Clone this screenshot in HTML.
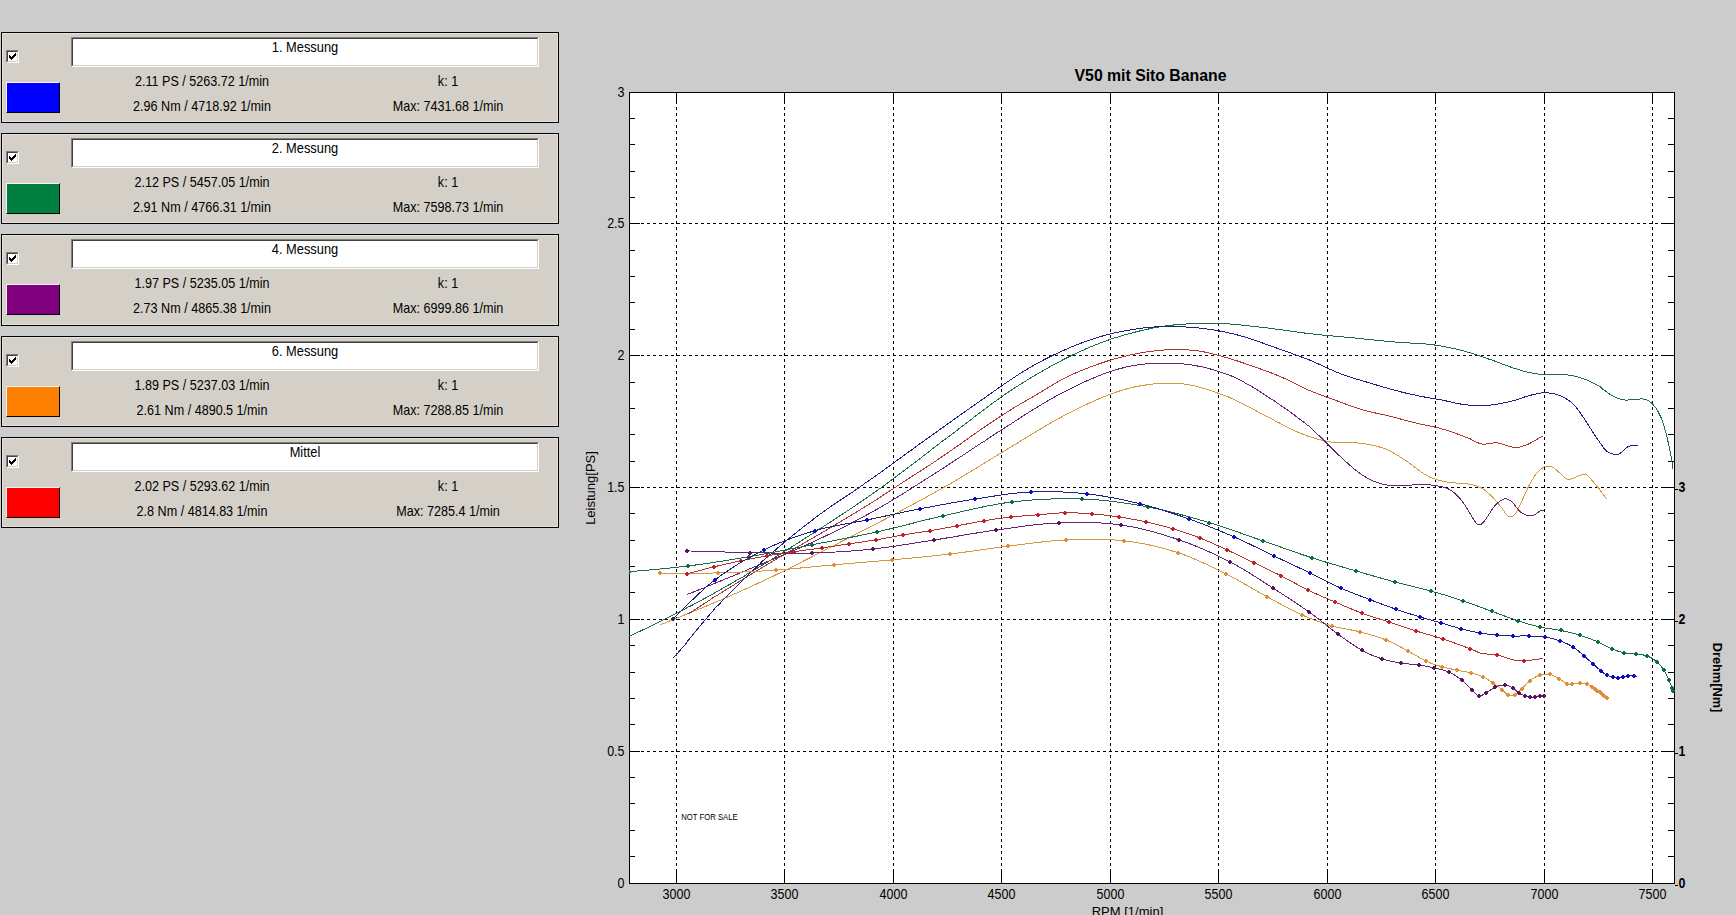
<!DOCTYPE html><html><head><meta charset="utf-8"><style>
*{margin:0;padding:0;box-sizing:border-box}
html,body{width:1736px;height:915px;overflow:hidden;background:#cccccc;font-family:"Liberation Sans",sans-serif;color:#000}
.p{position:absolute;left:1px;width:558px;height:91px;background:#d4d0c8;border:1px solid #000}
.p .hl{position:absolute;left:0;top:0;right:0;bottom:0;border:1px solid #e6e3de}
.cb{position:absolute;left:4px;top:17px;width:13px;height:13px;background:#fff;border-top:1px solid #808080;border-left:1px solid #808080;border-right:1px solid #fff;border-bottom:1px solid #fff}
.cb i{position:absolute;left:0;top:0;width:11px;height:11px;border-top:1px solid #404040;border-left:1px solid #404040;border-right:1px solid #d4d0c8;border-bottom:1px solid #d4d0c8}
.cb svg{position:absolute;left:2px;top:2px}
.sw{position:absolute;left:4px;top:49px;width:54px;height:31px;border-top:1px solid #f4f4f4;border-left:1px solid #f4f4f4;border-right:1px solid #000;border-bottom:1px solid #000}
.tb{position:absolute;left:69px;top:4px;width:468px;height:30px;background:#fff;border-top:1px solid #808080;border-left:1px solid #808080;border-right:1px solid #fff;border-bottom:1px solid #fff}
.tb i{position:absolute;left:0;top:0;right:0;bottom:0;border-top:1px solid #404040;border-left:1px solid #404040;border-right:1px solid #d4d0c8;border-bottom:1px solid #d4d0c8}
.t{position:absolute;white-space:nowrap;font-size:14.2px;line-height:14px;text-align:center;transform:scaleX(0.887)}
.tt{position:absolute;left:0;width:466px;top:1.6px;text-align:center;font-size:14.2px;line-height:14px;white-space:nowrap;transform:scaleX(0.905)}
svg.ch{position:absolute;left:0;top:0}
</style></head><body>
<div class="p" style="top:32px;height:91px"><div class="hl"></div>
<div class="cb"><i></i><svg width="7" height="7" viewBox="0 0 7 7" shape-rendering="crispEdges"><path d="M6 0h1v3h-1zM5 1h1v3h-1zM4 2h1v3h-1zM0 2h1v3h-1zM1 3h1v3h-1zM2 4h1v3h-1zM3 3h1v3h-1z" fill="#000"/></svg></div>
<div class="sw" style="background:#0000ff"></div>
<div class="tb"><i></i><div class="tt">1. Messung</div></div>
<div class="t" style="left:100px;width:200px;top:41px">2.11 PS / 5263.72 1/min</div>
<div class="t" style="left:346px;width:200px;top:41px">k: 1</div>
<div class="t" style="left:100px;width:200px;top:66px">2.96 Nm / 4718.92 1/min</div>
<div class="t" style="left:346px;width:200px;top:66px">Max: 7431.68 1/min</div>
</div>
<div class="p" style="top:133px;height:91px"><div class="hl"></div>
<div class="cb"><i></i><svg width="7" height="7" viewBox="0 0 7 7" shape-rendering="crispEdges"><path d="M6 0h1v3h-1zM5 1h1v3h-1zM4 2h1v3h-1zM0 2h1v3h-1zM1 3h1v3h-1zM2 4h1v3h-1zM3 3h1v3h-1z" fill="#000"/></svg></div>
<div class="sw" style="background:#008040"></div>
<div class="tb"><i></i><div class="tt">2. Messung</div></div>
<div class="t" style="left:100px;width:200px;top:41px">2.12 PS / 5457.05 1/min</div>
<div class="t" style="left:346px;width:200px;top:41px">k: 1</div>
<div class="t" style="left:100px;width:200px;top:66px">2.91 Nm / 4766.31 1/min</div>
<div class="t" style="left:346px;width:200px;top:66px">Max: 7598.73 1/min</div>
</div>
<div class="p" style="top:234px;height:92px"><div class="hl"></div>
<div class="cb"><i></i><svg width="7" height="7" viewBox="0 0 7 7" shape-rendering="crispEdges"><path d="M6 0h1v3h-1zM5 1h1v3h-1zM4 2h1v3h-1zM0 2h1v3h-1zM1 3h1v3h-1zM2 4h1v3h-1zM3 3h1v3h-1z" fill="#000"/></svg></div>
<div class="sw" style="background:#800080"></div>
<div class="tb"><i></i><div class="tt">4. Messung</div></div>
<div class="t" style="left:100px;width:200px;top:41px">1.97 PS / 5235.05 1/min</div>
<div class="t" style="left:346px;width:200px;top:41px">k: 1</div>
<div class="t" style="left:100px;width:200px;top:66px">2.73 Nm / 4865.38 1/min</div>
<div class="t" style="left:346px;width:200px;top:66px">Max: 6999.86 1/min</div>
</div>
<div class="p" style="top:336px;height:91px"><div class="hl"></div>
<div class="cb"><i></i><svg width="7" height="7" viewBox="0 0 7 7" shape-rendering="crispEdges"><path d="M6 0h1v3h-1zM5 1h1v3h-1zM4 2h1v3h-1zM0 2h1v3h-1zM1 3h1v3h-1zM2 4h1v3h-1zM3 3h1v3h-1z" fill="#000"/></svg></div>
<div class="sw" style="background:#ff8000"></div>
<div class="tb"><i></i><div class="tt">6. Messung</div></div>
<div class="t" style="left:100px;width:200px;top:41px">1.89 PS / 5237.03 1/min</div>
<div class="t" style="left:346px;width:200px;top:41px">k: 1</div>
<div class="t" style="left:100px;width:200px;top:66px">2.61 Nm / 4890.5 1/min</div>
<div class="t" style="left:346px;width:200px;top:66px">Max: 7288.85 1/min</div>
</div>
<div class="p" style="top:437px;height:91px"><div class="hl"></div>
<div class="cb"><i></i><svg width="7" height="7" viewBox="0 0 7 7" shape-rendering="crispEdges"><path d="M6 0h1v3h-1zM5 1h1v3h-1zM4 2h1v3h-1zM0 2h1v3h-1zM1 3h1v3h-1zM2 4h1v3h-1zM3 3h1v3h-1z" fill="#000"/></svg></div>
<div class="sw" style="background:#ff0000"></div>
<div class="tb"><i></i><div class="tt">Mittel</div></div>
<div class="t" style="left:100px;width:200px;top:41px">2.02 PS / 5293.62 1/min</div>
<div class="t" style="left:346px;width:200px;top:41px">k: 1</div>
<div class="t" style="left:100px;width:200px;top:66px">2.8 Nm / 4814.83 1/min</div>
<div class="t" style="left:346px;width:200px;top:66px">Max: 7285.4 1/min</div>
</div>
<svg class="ch" width="1736" height="915" viewBox="0 0 1736 915"><rect x="629" y="92" width="1045" height="791" fill="#fff"/><g shape-rendering="crispEdges"><line x1="676.5" y1="92" x2="676.5" y2="883" stroke="#000" stroke-dasharray="3 3" stroke-dashoffset="3" /><line x1="784.5" y1="92" x2="784.5" y2="883" stroke="#000" stroke-dasharray="3 3" stroke-dashoffset="3" /><line x1="893.5" y1="92" x2="893.5" y2="883" stroke="#000" stroke-dasharray="3 3" stroke-dashoffset="3" /><line x1="1001.5" y1="92" x2="1001.5" y2="883" stroke="#000" stroke-dasharray="3 3" stroke-dashoffset="3" /><line x1="1110.5" y1="92" x2="1110.5" y2="883" stroke="#000" stroke-dasharray="3 3" stroke-dashoffset="3" /><line x1="1218.5" y1="92" x2="1218.5" y2="883" stroke="#000" stroke-dasharray="3 3" stroke-dashoffset="3" /><line x1="1327.5" y1="92" x2="1327.5" y2="883" stroke="#000" stroke-dasharray="3 3" stroke-dashoffset="3" /><line x1="1435.5" y1="92" x2="1435.5" y2="883" stroke="#000" stroke-dasharray="3 3" stroke-dashoffset="3" /><line x1="1544.5" y1="92" x2="1544.5" y2="883" stroke="#000" stroke-dasharray="3 3" stroke-dashoffset="3" /><line x1="1652.5" y1="92" x2="1652.5" y2="883" stroke="#000" stroke-dasharray="3 3" stroke-dashoffset="3" /><line x1="629" y1="751.5" x2="1674" y2="751.5" stroke="#000" stroke-dasharray="3 3"/><line x1="629" y1="619.5" x2="1674" y2="619.5" stroke="#000" stroke-dasharray="3 3"/><line x1="629" y1="487.5" x2="1674" y2="487.5" stroke="#000" stroke-dasharray="3 3"/><line x1="629" y1="355.5" x2="1674" y2="355.5" stroke="#000" stroke-dasharray="3 3"/><line x1="629" y1="223.5" x2="1674" y2="223.5" stroke="#000" stroke-dasharray="3 3"/></g><path d="M676.5,92v11M676.5,883v-12M784.5,92v11M784.5,883v-12M893.5,92v11M893.5,883v-12M1001.5,92v11M1001.5,883v-12M1110.5,92v11M1110.5,883v-12M1218.5,92v11M1218.5,883v-12M1327.5,92v11M1327.5,883v-12M1435.5,92v11M1435.5,883v-12M1544.5,92v11M1544.5,883v-12M1652.5,92v11M1652.5,883v-12M629,856.5h6M1675,856.5h-7M629,830.5h6M1675,830.5h-7M629,803.5h6M1675,803.5h-7M629,777.5h6M1675,777.5h-7M629,751.5h11M1674,751.5h-13M629,724.5h6M1675,724.5h-7M629,698.5h6M1675,698.5h-7M629,672.5h6M1675,672.5h-7M629,645.5h6M1675,645.5h-7M629,619.5h11M1674,619.5h-13M629,592.5h6M1675,592.5h-7M629,566.5h6M1675,566.5h-7M629,540.5h6M1675,540.5h-7M629,513.5h6M1675,513.5h-7M629,487.5h11M1674,487.5h-13M629,461.5h6M1675,461.5h-7M629,434.5h6M1675,434.5h-7M629,408.5h6M1675,408.5h-7M629,382.5h6M1675,382.5h-7M629,355.5h11M1674,355.5h-13M629,329.5h6M1675,329.5h-7M629,302.5h6M1675,302.5h-7M629,276.5h6M1675,276.5h-7M629,250.5h6M1675,250.5h-7M629,223.5h11M1674,223.5h-13M629,197.5h6M1675,197.5h-7M629,171.5h6M1675,171.5h-7M629,144.5h6M1675,144.5h-7M629,118.5h6M1675,118.5h-7" stroke="#000" fill="none" shape-rendering="crispEdges"/><rect x="629.5" y="92.5" width="1045" height="791" fill="none" stroke="#000" shape-rendering="crispEdges"/><svg x="629" y="92" width="1046" height="792" viewBox="629 92 1046 792" overflow="hidden"><path d="M659.90,624.41 L660.93,624.20 L662.09,623.99 L663.36,623.60 L664.74,623.03 L666.23,622.34 L667.81,621.71 L669.48,621.04 L671.24,620.33 L673.07,619.60 L674.98,618.84 L676.95,618.17 L678.98,617.34 L681.06,616.37 L683.18,615.52 L685.34,614.64 L687.54,613.76 L689.76,612.86 L692.00,611.95 L694.25,611.03 L696.51,610.11 L698.77,609.19 L701.02,608.27 L703.26,607.35 L705.48,606.43 L707.67,605.52 L709.83,604.62 L711.94,603.73 L714.02,602.71 L716.04,601.85 L718.00,601.16 L720.00,600.30 L721.99,599.44 L723.98,598.57 L725.97,597.71 L727.96,596.83 L729.95,595.96 L731.94,595.08 L733.93,594.21 L735.91,593.32 L737.90,592.44 L739.88,591.55 L741.87,590.66 L743.85,589.76 L745.84,588.86 L747.82,587.96 L749.81,587.05 L751.79,586.14 L753.78,585.23 L755.77,584.31 L757.75,583.39 L759.74,582.47 L761.73,581.54 L763.72,580.60 L765.72,579.67 L767.71,578.73 L769.70,577.78 L771.70,576.83 L773.70,575.87 L775.70,574.91 L777.64,573.98 L779.57,573.05 L781.52,572.11 L783.46,571.16 L785.40,570.20 L787.35,569.23 L789.30,568.26 L791.24,567.29 L793.19,566.31 L795.14,565.33 L797.10,564.34 L799.05,563.35 L801.00,562.35 L802.95,561.35 L804.91,560.35 L806.86,559.35 L808.81,558.35 L810.76,557.34 L812.72,556.34 L814.67,555.33 L816.62,554.32 L818.57,553.32 L820.51,552.31 L822.46,551.30 L824.40,550.30 L826.35,549.30 L828.29,548.30 L830.23,547.30 L832.17,546.32 L834.10,545.33 L836.10,544.31 L838.09,543.28 L840.09,542.27 L842.08,541.25 L844.07,540.24 L846.06,539.23 L848.04,538.22 L850.03,537.21 L852.01,536.20 L853.99,535.19 L855.97,534.18 L857.95,533.17 L859.93,532.16 L861.91,531.15 L863.89,530.14 L865.87,529.12 L867.85,528.11 L869.83,527.09 L871.81,526.07 L873.79,525.05 L875.77,524.03 L877.76,523.00 L879.74,521.97 L881.73,520.93 L883.72,519.90 L885.71,518.85 L887.71,517.81 L889.70,516.75 L891.70,515.69 L893.63,514.67 L895.57,513.65 L897.51,512.62 L899.45,511.58 L901.40,510.55 L903.34,509.51 L905.29,508.47 L907.24,507.43 L909.19,506.39 L911.14,505.34 L913.09,504.29 L915.04,503.24 L916.99,502.18 L918.95,501.12 L920.90,500.06 L922.85,499.00 L924.81,497.93 L926.76,496.86 L928.71,495.79 L930.66,494.72 L932.61,493.64 L934.56,492.55 L936.51,491.47 L938.46,490.38 L940.40,489.29 L942.35,488.19 L944.29,487.09 L946.23,485.99 L948.17,484.89 L950.10,483.79 L952.10,482.63 L954.10,481.46 L956.09,480.29 L958.08,479.11 L960.07,477.93 L962.06,476.75 L964.05,475.55 L966.03,474.36 L968.02,473.15 L970.00,471.95 L971.98,470.74 L973.97,469.52 L975.95,468.31 L977.93,467.09 L979.91,465.87 L981.89,464.65 L983.87,463.43 L985.85,462.20 L987.83,460.98 L989.81,459.76 L991.80,458.54 L993.78,457.32 L995.76,456.10 L997.75,454.88 L999.74,453.67 L1001.72,452.46 L1003.71,451.26 L1005.71,450.05 L1007.70,448.84 L1009.63,447.69 L1011.56,446.54 L1013.49,445.37 L1015.42,444.20 L1017.35,443.02 L1019.28,441.84 L1021.22,440.66 L1023.15,439.47 L1025.09,438.29 L1027.02,437.11 L1028.96,435.92 L1030.89,434.74 L1032.83,433.56 L1034.77,432.38 L1036.71,431.21 L1038.64,430.05 L1040.58,428.89 L1042.52,427.73 L1044.46,426.58 L1046.40,425.45 L1048.34,424.32 L1050.28,423.20 L1052.22,422.09 L1054.16,421.00 L1056.10,419.91 L1058.04,418.84 L1059.98,417.79 L1061.92,416.75 L1063.86,415.73 L1065.80,414.72 L1067.74,413.72 L1069.69,412.73 L1071.64,411.74 L1073.60,410.76 L1075.55,409.78 L1077.51,408.80 L1079.48,407.83 L1081.44,406.87 L1083.41,405.92 L1085.37,404.98 L1087.34,404.05 L1089.31,403.13 L1091.27,402.23 L1093.24,401.33 L1095.20,400.45 L1097.16,399.59 L1099.12,398.74 L1101.07,397.91 L1103.02,397.10 L1104.97,396.31 L1106.91,395.53 L1108.85,394.78 L1110.78,394.05 L1112.71,393.34 L1114.62,392.66 L1116.54,392.00 L1118.44,391.37 L1120.33,390.77 L1122.22,390.20 L1124.10,389.74 L1126.11,389.18 L1128.11,388.46 L1130.11,387.96 L1132.10,387.56 L1134.10,387.11 L1136.08,386.68 L1138.07,386.28 L1140.05,385.91 L1142.02,385.56 L1143.99,385.23 L1145.95,384.93 L1147.91,384.66 L1149.86,384.41 L1151.81,384.18 L1153.74,383.98 L1155.68,383.80 L1157.60,383.65 L1159.52,383.52 L1161.42,383.42 L1163.32,383.34 L1165.22,383.28 L1167.10,383.24 L1168.97,383.23 L1170.84,383.24 L1172.69,383.27 L1174.54,383.33 L1176.38,383.40 L1178.20,383.48 L1180.32,383.63 L1182.43,383.85 L1184.52,384.10 L1186.61,384.40 L1188.69,384.74 L1190.75,385.12 L1192.81,385.54 L1194.85,385.99 L1196.89,386.48 L1198.91,387.00 L1200.92,387.65 L1202.92,388.23 L1204.91,388.74 L1206.88,389.36 L1208.85,390.00 L1210.80,390.65 L1212.75,391.32 L1214.68,392.00 L1216.59,392.69 L1218.50,393.39 L1220.39,394.09 L1222.27,394.79 L1224.14,395.47 L1226.00,396.04 L1228.11,396.86 L1230.20,397.84 L1232.27,398.72 L1234.33,399.62 L1236.37,400.56 L1238.39,401.52 L1240.40,402.67 L1242.40,403.67 L1244.38,404.52 L1246.34,405.54 L1248.29,406.57 L1250.23,407.60 L1252.15,408.63 L1254.05,409.67 L1255.94,410.69 L1257.82,411.71 L1259.68,412.71 L1261.53,413.70 L1263.37,414.66 L1265.19,415.58 L1267.00,416.34 L1269.09,417.41 L1271.16,418.66 L1273.20,419.72 L1275.22,420.95 L1277.22,422.01 L1279.19,422.88 L1281.15,423.91 L1283.09,424.92 L1285.01,425.92 L1286.92,426.91 L1288.81,427.87 L1290.69,428.81 L1292.55,429.72 L1294.40,430.60 L1296.24,431.45 L1298.07,432.27 L1299.89,433.03 L1301.70,433.64 L1303.72,434.57 L1305.72,435.46 L1307.70,436.04 L1309.66,436.71 L1311.59,437.33 L1313.52,437.92 L1315.42,438.47 L1317.31,438.99 L1319.19,439.48 L1321.06,439.94 L1322.91,440.37 L1324.76,440.77 L1326.60,441.14 L1328.44,441.50 L1330.27,441.82 L1332.10,442.11 L1334.04,442.38 L1335.98,442.59 L1337.90,442.73 L1339.82,442.81 L1341.72,442.85 L1343.62,442.86 L1345.50,442.84 L1347.37,442.82 L1349.24,442.79 L1351.09,442.77 L1352.93,442.77 L1354.76,442.81 L1356.59,442.89 L1358.40,443.02 L1360.20,443.15 L1362.27,443.41 L1364.34,443.76 L1366.40,444.08 L1368.45,444.43 L1370.48,444.81 L1372.50,445.29 L1374.51,445.75 L1376.49,446.16 L1378.45,446.68 L1380.38,447.24 L1382.29,447.84 L1384.16,448.47 L1386.00,449.03 L1388.13,449.92 L1390.23,451.05 L1392.29,452.12 L1394.32,453.46 L1396.31,454.66 L1398.26,455.69 L1400.19,456.93 L1402.08,458.18 L1403.95,459.42 L1405.79,460.63 L1407.60,461.84 L1409.56,463.20 L1411.46,464.60 L1413.33,466.00 L1415.16,467.40 L1416.96,468.79 L1418.72,470.15 L1420.47,471.46 L1422.19,472.68 L1423.90,473.78 L1425.60,474.63 L1427.69,475.78 L1429.74,477.10 L1431.75,477.93 L1433.72,478.54 L1435.68,479.19 L1437.62,479.78 L1439.56,480.33 L1441.50,480.84 L1443.44,481.29 L1445.37,481.68 L1447.29,482.00 L1449.20,482.27 L1451.10,482.50 L1452.98,482.72 L1454.85,482.92 L1456.70,483.11 L1458.55,483.29 L1460.39,483.43 L1462.23,483.56 L1464.05,483.67 L1465.85,483.80 L1467.61,483.97 L1469.33,484.20 L1471.00,484.49 L1472.85,484.90 L1474.65,485.38 L1476.40,485.91 L1478.11,486.51 L1479.78,487.20 L1481.41,487.98 L1483.00,488.90 L1484.80,490.12 L1486.54,491.51 L1488.22,492.99 L1489.86,494.55 L1491.48,496.12 L1493.10,497.75 L1495.07,499.87 L1497.06,502.19 L1498.99,504.47 L1500.80,506.62 L1502.40,508.86 L1504.46,511.95 L1506.10,514.35 L1507.90,516.11 L1509.53,516.95 L1511.26,516.96 L1513.04,516.15 L1514.80,514.52 L1516.50,512.11 L1518.18,509.07 L1519.90,505.40 L1521.70,501.43 L1523.20,498.05 L1524.72,494.67 L1526.30,491.18 L1527.95,487.64 L1529.70,484.25 L1531.25,481.49 L1532.88,478.86 L1534.56,476.29 L1536.28,473.92 L1538.00,471.84 L1539.70,470.11 L1541.40,468.71 L1543.13,467.60 L1544.87,466.78 L1546.59,466.26 L1548.27,466.05 L1549.90,466.18 L1551.77,466.78 L1553.58,467.82 L1555.35,469.14 L1557.08,470.61 L1558.80,472.13 L1560.54,473.75 L1562.30,475.44 L1564.02,477.06 L1565.64,478.31 L1567.10,479.11 L1569.04,479.47 L1570.66,479.23 L1572.50,478.59 L1574.22,477.81 L1576.10,476.93 L1578.03,476.04 L1579.90,475.31 L1581.72,474.76 L1583.55,474.42 L1585.30,474.45 L1586.90,475.03 L1588.80,476.53 L1590.48,478.41 L1591.90,480.19 L1593.39,482.00 L1594.60,483.84 L1596.03,485.28 L1597.40,486.93 L1598.55,488.11 L1599.60,489.27 L1600.58,490.83 L1601.60,492.49 L1602.82,494.04 L1604.10,495.60 L1605.51,497.46 L1606.60,498.93" stroke="#d49a40" stroke-width="1" fill="none" shape-rendering="crispEdges"/><path d="M686.90,594.24 L687.95,594.01 L689.11,593.80 L690.39,593.40 L691.77,592.82 L693.26,592.12 L694.84,591.47 L696.51,590.79 L698.26,590.08 L700.09,589.34 L701.99,588.56 L703.96,587.88 L705.98,587.05 L708.06,586.06 L710.19,585.19 L712.36,584.31 L714.57,583.41 L716.81,582.49 L719.07,581.57 L721.35,580.64 L723.64,579.70 L725.94,578.76 L728.24,577.82 L730.53,576.88 L732.82,575.94 L735.08,575.01 L737.33,574.09 L739.55,573.17 L741.73,572.27 L743.87,571.39 L745.97,570.52 L748.01,569.52 L750.00,568.69 L751.96,568.02 L753.91,567.21 L755.87,566.39 L757.82,565.58 L759.77,564.77 L761.73,563.96 L763.68,563.16 L765.63,562.35 L767.58,561.54 L769.53,560.73 L771.48,559.92 L773.42,559.11 L775.37,558.30 L777.31,557.49 L779.26,556.67 L781.20,555.86 L783.14,555.04 L785.08,554.22 L787.02,553.40 L788.96,552.57 L790.90,551.74 L792.83,550.91 L794.76,550.08 L796.70,549.23 L798.63,548.39 L800.56,547.54 L802.49,546.68 L804.41,545.82 L806.34,544.96 L808.26,544.08 L810.18,543.21 L812.10,542.33 L814.08,541.41 L816.05,540.48 L818.03,539.56 L820.00,538.63 L821.96,537.69 L823.93,536.76 L825.89,535.82 L827.85,534.87 L829.81,533.93 L831.76,532.97 L833.72,532.01 L835.67,531.05 L837.62,530.08 L839.57,529.11 L841.52,528.13 L843.47,527.15 L845.42,526.16 L847.37,525.17 L849.32,524.16 L851.27,523.16 L853.22,522.14 L855.18,521.12 L857.13,520.09 L859.08,519.05 L861.03,518.01 L862.99,516.96 L864.95,515.90 L866.91,514.84 L868.87,513.76 L870.83,512.68 L872.80,511.59 L874.77,510.48 L876.74,509.37 L878.71,508.25 L880.68,507.11 L882.65,505.97 L884.62,504.81 L886.59,503.65 L888.57,502.47 L890.54,501.29 L892.52,500.10 L894.49,498.90 L896.47,497.70 L898.44,496.48 L900.42,495.26 L902.40,494.04 L904.38,492.81 L906.36,491.57 L908.33,490.33 L910.31,489.08 L912.29,487.84 L914.28,486.58 L916.26,485.33 L918.24,484.07 L920.22,482.81 L922.20,481.55 L924.18,480.29 L926.17,479.03 L928.15,477.77 L930.13,476.51 L932.12,475.25 L934.10,473.99 L936.08,472.73 L938.07,471.46 L940.05,470.19 L942.03,468.91 L944.01,467.63 L946.00,466.34 L947.98,465.05 L949.96,463.75 L951.94,462.45 L953.92,461.14 L955.91,459.83 L957.89,458.52 L959.87,457.21 L961.86,455.89 L963.84,454.58 L965.83,453.26 L967.82,451.94 L969.81,450.62 L971.80,449.30 L973.79,447.98 L975.78,446.66 L977.77,445.34 L979.77,444.03 L981.77,442.72 L983.76,441.62 L985.76,440.31 L987.77,438.79 L989.77,437.49 L991.78,436.19 L993.79,434.68 L995.80,433.39 L997.75,432.36 L999.71,431.11 L1001.67,429.85 L1003.63,428.59 L1005.59,427.32 L1007.56,426.04 L1009.53,424.77 L1011.50,423.49 L1013.47,422.21 L1015.45,420.93 L1017.43,419.65 L1019.40,418.37 L1021.38,417.10 L1023.36,415.83 L1025.34,414.56 L1027.32,413.30 L1029.31,412.04 L1031.29,410.80 L1033.27,409.56 L1035.25,408.33 L1037.23,407.11 L1039.21,405.90 L1041.19,404.70 L1043.16,403.52 L1045.14,402.35 L1047.11,401.19 L1049.08,400.05 L1051.05,398.93 L1053.02,397.83 L1054.98,396.75 L1056.94,395.68 L1058.90,394.64 L1060.86,393.60 L1062.82,392.58 L1064.78,391.57 L1066.74,390.56 L1068.70,389.56 L1070.66,388.58 L1072.63,387.60 L1074.59,386.63 L1076.55,385.67 L1078.51,384.73 L1080.48,383.80 L1082.44,382.88 L1084.40,381.98 L1086.35,381.09 L1088.31,380.21 L1090.26,379.35 L1092.21,378.51 L1094.16,377.69 L1096.11,376.88 L1098.05,376.09 L1099.99,375.32 L1101.92,374.57 L1103.85,373.84 L1105.78,373.13 L1107.70,372.45 L1109.62,371.78 L1111.53,371.14 L1113.44,370.53 L1115.34,369.94 L1117.23,369.37 L1119.12,368.84 L1121.00,368.41 L1123.00,367.89 L1125.00,367.23 L1127.00,366.78 L1129.00,366.43 L1131.00,366.03 L1132.99,365.66 L1134.98,365.32 L1136.97,365.00 L1138.95,364.71 L1140.93,364.45 L1142.90,364.21 L1144.87,364.00 L1146.83,363.81 L1148.79,363.64 L1150.74,363.50 L1152.69,363.38 L1154.63,363.28 L1156.56,363.20 L1158.49,363.14 L1160.41,363.09 L1162.32,363.07 L1164.22,363.07 L1166.11,363.08 L1168.00,363.11 L1169.87,363.15 L1171.74,363.21 L1173.60,363.28 L1175.44,363.37 L1177.28,363.46 L1179.10,363.55 L1181.19,363.70 L1183.28,363.90 L1185.35,364.11 L1187.42,364.35 L1189.47,364.61 L1191.52,364.91 L1193.56,365.23 L1195.58,365.58 L1197.60,366.02 L1199.60,366.43 L1201.60,366.78 L1203.58,367.23 L1205.55,367.70 L1207.51,368.19 L1209.46,368.71 L1211.40,369.24 L1213.32,369.80 L1215.24,370.37 L1217.14,370.96 L1219.03,371.57 L1220.91,372.20 L1222.77,372.84 L1224.62,373.50 L1226.46,374.17 L1228.29,374.83 L1230.10,375.41 L1232.22,376.27 L1234.33,377.31 L1236.42,378.25 L1238.49,379.23 L1240.54,380.25 L1242.57,381.30 L1244.59,382.57 L1246.59,383.69 L1248.57,384.64 L1250.54,385.79 L1252.49,386.96 L1254.42,388.15 L1256.34,389.35 L1258.25,390.56 L1260.14,391.77 L1262.02,392.99 L1263.88,394.21 L1265.73,395.43 L1267.57,396.64 L1269.39,397.84 L1271.20,398.99 L1273.00,399.95 L1275.07,401.32 L1277.12,402.91 L1279.15,404.27 L1281.16,405.87 L1283.16,407.24 L1285.13,408.38 L1287.09,409.76 L1289.02,411.13 L1290.94,412.51 L1292.84,413.90 L1294.72,415.29 L1296.58,416.68 L1298.41,418.08 L1300.23,419.48 L1302.03,420.88 L1303.80,422.29 L1305.56,423.71 L1307.29,425.07 L1309.00,426.22 L1311.13,428.05 L1313.22,430.22 L1315.27,432.42 L1317.28,434.33 L1319.25,435.93 L1321.19,437.83 L1323.10,439.73 L1324.99,441.62 L1326.85,443.50 L1328.68,445.35 L1330.50,447.17 L1332.29,448.96 L1334.07,450.70 L1335.84,452.36 L1337.60,453.99 L1339.61,455.88 L1341.58,457.76 L1343.53,459.55 L1345.45,461.30 L1347.34,463.01 L1349.20,464.67 L1351.04,466.28 L1352.86,467.83 L1354.65,469.33 L1356.42,470.75 L1358.16,472.11 L1359.89,473.35 L1361.60,474.54 L1363.58,475.86 L1365.52,477.09 L1367.42,478.16 L1369.28,479.13 L1371.11,480.01 L1372.92,480.81 L1374.71,481.53 L1376.49,482.20 L1378.26,482.81 L1380.03,483.37 L1381.80,483.89 L1383.75,484.40 L1385.68,484.83 L1387.59,485.16 L1389.50,485.41 L1391.39,485.60 L1393.27,485.74 L1395.14,485.83 L1397.00,485.89 L1398.85,485.92 L1400.70,485.93 L1402.55,485.90 L1404.41,485.81 L1406.26,485.66 L1408.11,485.47 L1409.94,485.26 L1411.76,485.04 L1413.55,484.83 L1415.31,484.66 L1417.03,484.53 L1418.70,484.45 L1420.72,484.41 L1422.66,484.42 L1424.54,484.47 L1426.38,484.56 L1428.19,484.68 L1430.01,484.85 L1431.84,485.06 L1433.70,485.31 L1435.61,485.58 L1437.54,485.87 L1439.49,486.19 L1441.43,486.56 L1443.36,487.02 L1445.26,487.60 L1447.11,488.30 L1448.90,489.15 L1450.89,490.35 L1452.83,491.77 L1454.74,493.32 L1456.59,495.01 L1458.39,496.82 L1460.12,498.69 L1461.80,500.70 L1463.68,503.26 L1465.49,506.04 L1467.21,508.85 L1468.86,511.62 L1470.42,514.14 L1471.90,516.59 L1473.89,519.79 L1475.64,522.42 L1477.30,524.16 L1479.00,525.01 L1480.71,524.69 L1482.38,523.41 L1484.11,521.35 L1486.00,518.74 L1487.65,516.29 L1489.40,513.64 L1491.22,510.80 L1493.10,508.01 L1495.00,505.61 L1496.65,503.89 L1498.37,502.37 L1500.13,501.03 L1501.86,499.94 L1503.54,499.23 L1505.10,498.85 L1507.25,499.07 L1509.24,500.03 L1511.11,501.22 L1512.90,502.89 L1514.59,504.86 L1516.18,506.95 L1517.70,508.91 L1519.20,510.66 L1521.17,512.43 L1523.07,513.71 L1524.90,514.58 L1526.64,515.21 L1528.32,515.61 L1530.00,515.96 L1531.70,515.76 L1533.41,515.26 L1535.10,514.51 L1536.80,513.35 L1538.50,511.94 L1540.10,510.91 L1541.71,510.57 L1543.24,510.61 L1544.30,510.67" stroke="#642670" stroke-width="1" fill="none" shape-rendering="crispEdges"/><path d="M686.90,613.94 L687.99,613.70 L689.33,613.14 L690.89,612.34 L692.63,611.08 L694.52,610.06 L696.55,608.74 L698.67,607.15 L700.86,605.74 L703.09,604.31 L705.33,602.87 L707.55,601.44 L709.72,600.05 L711.81,598.49 L713.80,597.23 L715.72,596.23 L717.64,595.02 L719.57,593.81 L721.49,592.60 L723.42,591.40 L725.34,590.20 L727.26,588.99 L729.19,587.80 L731.11,586.60 L733.03,585.41 L734.95,584.22 L736.87,583.03 L738.78,581.84 L740.70,580.66 L742.61,579.48 L744.52,578.30 L746.43,577.13 L748.34,575.96 L750.25,574.79 L752.16,573.62 L754.06,572.46 L755.97,571.30 L757.87,570.15 L759.78,568.99 L761.68,567.84 L763.59,566.70 L765.49,565.55 L767.40,564.41 L769.31,563.28 L771.21,562.15 L773.11,561.03 L775.00,559.91 L776.90,558.80 L778.80,557.70 L780.69,556.59 L782.59,555.49 L784.50,554.38 L786.41,553.28 L788.32,552.17 L790.24,551.05 L792.17,549.94 L794.10,548.81 L796.04,547.69 L798.00,546.55 L799.96,545.42 L801.93,544.28 L803.91,543.14 L805.89,542.00 L807.88,540.86 L809.86,539.72 L811.84,538.57 L813.82,537.43 L815.80,536.28 L817.78,535.13 L819.74,533.98 L821.70,532.83 L823.65,531.68 L825.60,530.53 L827.54,529.38 L829.48,528.23 L831.41,527.07 L833.34,525.92 L835.27,524.76 L837.20,523.60 L839.13,522.44 L841.06,521.28 L843.00,520.11 L844.93,518.95 L846.86,517.77 L848.80,516.60 L850.74,515.43 L852.68,514.25 L854.63,513.07 L856.58,511.89 L858.52,510.71 L860.47,509.53 L862.42,508.34 L864.37,507.15 L866.31,505.96 L868.25,504.76 L870.20,503.56 L872.13,502.35 L874.07,501.13 L876.00,499.91 L877.93,498.68 L879.85,497.45 L881.76,496.20 L883.67,494.95 L885.58,493.70 L887.49,492.44 L889.40,491.18 L891.31,489.91 L893.22,488.64 L895.13,487.38 L897.04,486.11 L898.95,484.85 L900.87,483.59 L902.80,482.33 L904.73,481.08 L906.67,479.83 L908.61,478.58 L910.56,477.33 L912.51,476.09 L914.46,474.84 L916.41,473.60 L918.36,472.35 L920.31,471.10 L922.25,469.85 L924.20,468.59 L926.14,467.33 L928.07,466.06 L930.00,464.79 L931.92,463.51 L933.84,462.24 L935.75,460.95 L937.65,459.67 L939.56,458.38 L941.46,457.09 L943.36,455.79 L945.26,454.49 L947.16,453.19 L949.06,451.88 L950.96,450.56 L952.87,449.24 L954.78,447.92 L956.70,446.59 L958.62,445.24 L960.55,443.89 L962.48,442.53 L964.41,441.16 L966.34,439.78 L968.28,438.40 L970.22,437.02 L972.16,435.63 L974.10,434.25 L976.04,432.88 L977.98,431.51 L979.92,430.16 L981.86,428.81 L983.80,427.48 L985.74,426.16 L987.68,424.85 L989.62,423.54 L991.56,422.23 L993.51,420.94 L995.45,419.65 L997.39,418.36 L999.34,417.09 L1001.28,415.82 L1003.23,414.57 L1005.17,413.32 L1007.11,412.08 L1009.06,410.85 L1011.00,409.64 L1012.94,408.44 L1014.89,407.25 L1016.84,406.08 L1018.79,404.92 L1020.73,403.77 L1022.68,402.63 L1024.63,401.50 L1026.58,400.37 L1028.52,399.25 L1030.47,398.13 L1032.40,397.01 L1034.34,395.89 L1036.27,394.76 L1038.20,393.64 L1040.12,392.50 L1042.04,391.35 L1043.95,390.20 L1045.85,389.04 L1047.75,387.88 L1049.65,386.73 L1051.55,385.58 L1053.45,384.44 L1055.35,383.31 L1057.25,382.21 L1059.15,381.12 L1061.06,380.07 L1062.98,379.04 L1064.90,378.04 L1066.83,377.07 L1068.76,376.13 L1070.71,375.21 L1072.65,374.31 L1074.60,373.43 L1076.55,372.58 L1078.51,371.74 L1080.46,370.93 L1082.41,370.13 L1084.36,369.34 L1086.30,368.57 L1088.24,367.82 L1090.17,367.08 L1092.10,366.35 L1094.02,365.63 L1095.93,364.93 L1097.83,364.25 L1099.73,363.59 L1101.62,362.94 L1103.51,362.31 L1105.40,361.69 L1107.29,361.09 L1109.18,360.50 L1111.07,359.93 L1112.97,359.37 L1114.87,358.82 L1116.78,358.29 L1118.70,357.77 L1120.62,357.27 L1122.55,356.77 L1124.49,356.30 L1126.43,355.83 L1128.37,355.38 L1130.32,354.95 L1132.26,354.53 L1134.21,354.13 L1136.16,353.74 L1138.11,353.37 L1140.06,353.02 L1142.01,352.68 L1143.96,352.36 L1145.90,352.06 L1147.84,351.77 L1149.79,351.49 L1151.74,351.23 L1153.69,350.99 L1155.63,350.76 L1157.58,350.55 L1159.53,350.35 L1161.48,350.18 L1163.42,350.02 L1165.37,349.89 L1167.30,349.77 L1169.24,349.68 L1171.17,349.61 L1173.10,349.56 L1175.02,349.54 L1176.94,349.53 L1178.85,349.54 L1180.75,349.58 L1182.65,349.63 L1184.55,349.71 L1186.45,349.81 L1188.35,349.93 L1190.25,350.07 L1192.15,350.24 L1194.05,350.43 L1195.96,350.66 L1197.88,350.90 L1199.80,351.18 L1201.73,351.49 L1203.66,351.84 L1205.60,352.22 L1207.54,352.62 L1209.48,353.06 L1211.43,353.53 L1213.38,354.01 L1215.32,354.51 L1217.27,355.03 L1219.22,355.57 L1221.17,356.11 L1223.12,356.66 L1225.06,357.21 L1227.00,357.77 L1228.94,358.34 L1230.88,358.92 L1232.82,359.52 L1234.76,360.13 L1236.70,360.75 L1238.64,361.39 L1240.58,362.03 L1242.52,362.69 L1244.46,363.35 L1246.39,364.02 L1248.32,364.69 L1250.25,365.37 L1252.18,366.04 L1254.10,366.72 L1256.02,367.40 L1257.93,368.07 L1259.84,368.75 L1261.74,369.43 L1263.64,370.11 L1265.54,370.80 L1267.44,371.49 L1269.34,372.20 L1271.24,372.91 L1273.15,373.65 L1275.05,374.40 L1276.96,375.16 L1278.88,375.95 L1280.80,376.77 L1282.73,377.62 L1284.66,378.50 L1286.60,379.42 L1288.55,380.36 L1290.49,381.32 L1292.44,382.30 L1294.39,383.28 L1296.34,384.27 L1298.29,385.25 L1300.24,386.22 L1302.19,387.17 L1304.13,388.09 L1306.07,388.98 L1308.00,389.84 L1309.93,390.66 L1311.85,391.46 L1313.77,392.23 L1315.69,392.98 L1317.60,393.72 L1319.51,394.44 L1321.43,395.15 L1323.34,395.85 L1325.24,396.54 L1327.15,397.23 L1329.06,397.92 L1330.97,398.61 L1332.89,399.30 L1334.80,400.00 L1336.71,400.71 L1338.62,401.43 L1340.53,402.14 L1342.44,402.87 L1344.35,403.58 L1346.26,404.30 L1348.17,405.01 L1350.08,405.71 L1351.99,406.39 L1353.91,407.07 L1355.82,407.72 L1357.75,408.36 L1359.67,408.97 L1361.60,409.56 L1363.54,410.11 L1365.48,410.64 L1367.42,411.14 L1369.37,411.62 L1371.33,412.08 L1373.28,412.52 L1375.24,412.95 L1377.19,413.38 L1379.15,413.80 L1381.11,414.22 L1383.06,414.65 L1385.01,415.09 L1386.96,415.55 L1388.90,416.01 L1390.84,416.50 L1392.77,416.99 L1394.71,417.48 L1396.64,417.99 L1398.56,418.50 L1400.49,419.01 L1402.42,419.52 L1404.34,420.03 L1406.27,420.54 L1408.19,421.04 L1410.12,421.54 L1412.05,422.03 L1413.97,422.52 L1415.90,422.99 L1417.83,423.44 L1419.76,423.88 L1421.69,424.30 L1423.62,424.71 L1425.55,425.11 L1427.48,425.51 L1429.41,425.91 L1431.34,426.32 L1433.26,426.74 L1435.19,427.17 L1437.12,427.62 L1439.05,428.10 L1440.97,428.61 L1442.90,429.14 L1444.86,429.62 L1446.88,430.25 L1448.95,431.03 L1451.04,431.73 L1453.14,432.45 L1455.23,433.19 L1457.31,433.94 L1459.34,434.82 L1461.32,435.58 L1463.23,436.18 L1465.04,436.88 L1466.76,437.54 L1468.35,437.98 L1469.80,438.59 L1472.59,440.23 L1474.69,441.36 L1476.37,442.10 L1477.90,442.80 L1479.52,443.43 L1481.50,443.92 L1483.26,444.09 L1485.14,444.04 L1487.10,443.89 L1489.11,443.54 L1491.12,443.17 L1493.09,442.97 L1495.00,442.85 L1496.80,442.90 L1498.75,443.17 L1500.65,443.62 L1502.49,444.19 L1504.26,444.81 L1505.97,445.42 L1507.62,445.93 L1509.20,446.30 L1511.30,446.82 L1513.28,447.20 L1515.13,447.34 L1516.84,447.40 L1518.40,447.30 L1520.52,446.89 L1522.24,446.33 L1524.00,445.71 L1525.66,445.11 L1527.36,444.52 L1529.90,443.33 L1531.55,442.44 L1533.60,441.29 L1535.86,440.00 L1538.16,438.66 L1540.31,437.41 L1542.11,436.35 L1543.40,435.60" stroke="#b03636" stroke-width="1" fill="none" shape-rendering="crispEdges"/><path d="M628.80,636.02 L629.85,635.76 L631.02,635.51 L632.30,635.03 L633.70,634.35 L635.19,633.51 L636.79,632.75 L638.47,631.94 L640.25,631.09 L642.09,630.21 L644.01,629.44 L646.00,628.47 L648.05,627.31 L650.14,626.29 L652.29,625.25 L654.47,624.19 L656.69,623.10 L658.94,622.00 L661.21,620.89 L663.49,619.77 L665.79,618.63 L668.08,617.49 L670.37,616.35 L672.65,615.21 L674.92,614.07 L677.16,612.94 L679.37,611.81 L681.55,610.70 L683.68,609.60 L685.77,608.34 L687.80,607.27 L689.74,606.42 L691.68,605.40 L693.63,604.37 L695.58,603.33 L697.53,602.28 L699.48,601.23 L701.43,600.17 L703.39,599.11 L705.35,598.04 L707.32,596.96 L709.28,595.88 L711.25,594.79 L713.22,593.70 L715.19,592.60 L717.16,591.50 L719.14,590.39 L721.12,589.28 L723.10,588.16 L725.08,587.03 L727.06,585.90 L729.05,584.77 L731.03,583.63 L733.02,582.48 L735.02,581.33 L737.01,580.18 L739.00,579.02 L741.00,577.86 L743.00,576.89 L745.00,575.71 L747.00,574.14 L749.00,572.95 L750.94,572.01 L752.88,570.86 L754.83,569.70 L756.78,568.53 L758.72,567.36 L760.67,566.18 L762.62,565.00 L764.58,563.81 L766.53,562.61 L768.49,561.41 L770.45,560.21 L772.41,559.00 L774.37,557.78 L776.33,556.56 L778.30,555.34 L780.26,554.11 L782.23,552.87 L784.20,551.63 L786.17,550.39 L788.15,549.14 L790.13,547.89 L792.10,546.64 L794.08,545.38 L796.07,544.12 L798.05,542.85 L800.04,541.58 L802.03,540.31 L804.02,539.03 L806.01,537.76 L808.00,536.48 L810.00,535.18 L812.00,533.89 L813.94,532.65 L815.88,531.40 L817.83,530.15 L819.78,528.89 L821.73,527.63 L823.68,526.37 L825.64,525.10 L827.60,523.84 L829.56,522.56 L831.52,521.29 L833.49,520.01 L835.45,518.73 L837.42,517.44 L839.39,516.15 L841.36,514.85 L843.33,513.56 L845.31,512.25 L847.28,510.94 L849.26,509.63 L851.23,508.31 L853.21,506.99 L855.19,505.66 L857.17,504.32 L859.15,502.98 L861.14,501.64 L863.12,500.29 L865.10,498.93 L867.08,497.56 L869.07,496.19 L871.05,494.81 L873.03,493.43 L875.02,492.04 L877.00,490.64 L878.98,489.23 L880.96,487.81 L882.95,486.38 L884.93,484.95 L886.91,483.50 L888.89,482.05 L890.86,480.58 L892.84,479.11 L894.82,477.64 L896.80,476.15 L898.79,474.66 L900.77,473.17 L902.75,471.66 L904.73,470.16 L906.72,468.64 L908.71,467.12 L910.69,465.60 L912.69,464.08 L914.68,462.55 L916.67,461.02 L918.67,459.74 L920.67,458.20 L922.67,456.40 L924.68,454.86 L926.69,453.32 L928.70,451.78 L930.72,450.24 L932.74,448.70 L934.76,447.16 L936.79,445.62 L938.82,444.08 L940.86,442.29 L942.90,440.75 L944.83,439.55 L946.76,438.11 L948.70,436.64 L950.64,435.17 L952.59,433.68 L954.53,432.19 L956.49,430.70 L958.44,429.20 L960.40,427.69 L962.36,426.18 L964.32,424.67 L966.29,423.15 L968.26,421.64 L970.23,420.12 L972.20,418.61 L974.18,417.09 L976.15,415.58 L978.13,414.07 L980.11,412.57 L982.10,411.07 L984.08,409.58 L986.06,408.09 L988.05,406.61 L990.04,405.14 L992.02,403.68 L994.01,402.23 L996.00,400.79 L997.99,399.36 L999.97,397.95 L1001.96,396.55 L1003.95,395.16 L1005.94,393.79 L1007.93,392.44 L1009.91,391.10 L1011.90,389.78 L1013.83,388.52 L1015.77,387.27 L1017.71,386.02 L1019.66,384.77 L1021.61,383.54 L1023.56,382.31 L1025.51,381.10 L1027.47,379.89 L1029.43,378.69 L1031.39,377.50 L1033.35,376.32 L1035.31,375.15 L1037.28,373.99 L1039.24,372.84 L1041.21,371.70 L1043.17,370.57 L1045.14,369.46 L1047.10,368.35 L1049.06,367.26 L1051.02,366.17 L1052.98,365.10 L1054.94,364.04 L1056.89,363.00 L1058.84,361.96 L1060.79,360.94 L1062.73,359.94 L1064.67,358.94 L1066.61,357.96 L1068.54,356.99 L1070.46,356.04 L1072.39,355.10 L1074.30,354.18 L1076.21,353.27 L1078.11,352.37 L1080.01,351.51 L1081.90,350.80 L1083.96,349.86 L1086.01,348.80 L1088.06,347.92 L1090.10,347.05 L1092.14,346.21 L1094.18,345.38 L1096.21,344.57 L1098.24,343.78 L1100.27,343.01 L1102.29,342.25 L1104.31,341.51 L1106.33,340.79 L1108.34,340.09 L1110.34,339.40 L1112.35,338.62 L1114.35,337.97 L1116.34,337.44 L1118.33,336.82 L1120.32,336.21 L1122.30,335.61 L1124.28,335.04 L1126.26,334.47 L1128.23,333.92 L1130.19,333.38 L1132.16,332.86 L1134.11,332.35 L1136.07,331.85 L1138.02,331.36 L1139.96,330.89 L1141.90,330.43 L1143.84,329.98 L1145.77,329.54 L1147.70,329.19 L1149.75,328.74 L1151.80,328.25 L1153.84,327.86 L1155.88,327.48 L1157.92,327.13 L1159.96,326.79 L1161.99,326.48 L1164.02,326.18 L1166.05,325.91 L1168.07,325.65 L1170.08,325.40 L1172.10,325.18 L1174.10,324.94 L1176.10,324.75 L1178.10,324.60 L1180.09,324.44 L1182.07,324.28 L1184.05,324.15 L1186.02,324.02 L1187.98,323.91 L1189.93,323.80 L1191.88,323.71 L1193.82,323.63 L1195.75,323.55 L1197.67,323.49 L1199.58,323.43 L1201.49,323.38 L1203.38,323.34 L1205.26,323.30 L1207.14,323.27 L1209.00,323.24 L1211.13,323.22 L1213.24,323.22 L1215.34,323.25 L1217.43,323.30 L1219.51,323.36 L1221.57,323.45 L1223.63,323.55 L1225.67,323.67 L1227.70,323.80 L1229.73,323.95 L1231.74,324.14 L1233.74,324.31 L1235.74,324.47 L1237.72,324.66 L1239.70,324.86 L1241.67,325.06 L1243.63,325.28 L1245.59,325.49 L1247.53,325.71 L1249.47,325.94 L1251.41,326.16 L1253.34,326.38 L1255.26,326.61 L1257.18,326.83 L1259.09,327.04 L1261.00,327.25 L1262.90,327.42 L1264.95,327.65 L1266.99,327.92 L1269.02,328.16 L1271.05,328.40 L1273.06,328.65 L1275.07,328.96 L1277.06,329.22 L1279.05,329.45 L1281.03,329.72 L1283.01,329.99 L1284.97,330.27 L1286.93,330.54 L1288.88,330.82 L1290.82,331.10 L1292.76,331.37 L1294.68,331.65 L1296.60,331.92 L1298.51,332.19 L1300.42,332.45 L1302.32,332.71 L1304.21,332.96 L1306.09,333.21 L1307.97,333.45 L1309.84,333.68 L1311.70,333.86 L1313.72,334.10 L1315.73,334.40 L1317.73,334.62 L1319.72,334.79 L1321.71,334.99 L1323.69,335.18 L1325.66,335.37 L1327.62,335.56 L1329.57,335.73 L1331.51,335.91 L1333.45,336.08 L1335.37,336.25 L1337.29,336.41 L1339.20,336.58 L1341.09,336.74 L1342.98,336.90 L1344.86,337.07 L1346.72,337.23 L1348.58,337.40 L1350.43,337.57 L1352.26,337.74 L1354.09,337.91 L1355.90,338.05 L1357.97,338.26 L1360.02,338.51 L1362.06,338.72 L1364.08,338.97 L1366.09,339.18 L1368.08,339.36 L1370.06,339.57 L1372.02,339.78 L1373.98,339.99 L1375.92,340.19 L1377.85,340.40 L1379.77,340.60 L1381.69,340.79 L1383.59,340.99 L1385.49,341.18 L1387.38,341.37 L1389.27,341.55 L1391.15,341.72 L1393.03,341.89 L1394.90,342.03 L1396.98,342.20 L1399.04,342.38 L1401.10,342.52 L1403.16,342.64 L1405.20,342.75 L1407.23,342.85 L1409.25,342.95 L1411.27,343.06 L1413.27,343.16 L1415.26,343.24 L1417.24,343.35 L1419.21,343.46 L1421.17,343.59 L1423.12,343.73 L1425.06,343.89 L1426.99,344.07 L1428.90,344.27 L1430.80,344.49 L1432.80,344.76 L1434.79,345.04 L1436.76,345.33 L1438.72,345.64 L1440.66,345.96 L1442.60,346.30 L1444.52,346.65 L1446.43,347.01 L1448.33,347.39 L1450.21,347.78 L1452.09,348.18 L1453.95,348.59 L1455.80,349.01 L1457.64,349.44 L1459.47,349.88 L1461.29,350.32 L1463.10,350.69 L1465.14,351.24 L1467.16,352.00 L1469.16,352.59 L1471.15,353.10 L1473.13,353.73 L1475.09,354.37 L1477.04,355.02 L1478.97,355.67 L1480.89,356.34 L1482.79,357.00 L1484.68,357.66 L1486.56,358.33 L1488.42,358.98 L1490.27,359.61 L1492.10,360.13 L1494.20,360.87 L1496.28,361.74 L1498.35,362.50 L1500.40,363.26 L1502.43,364.02 L1504.45,364.90 L1506.44,365.65 L1508.41,366.25 L1510.35,366.96 L1512.28,367.64 L1514.18,368.28 L1516.05,368.87 L1517.90,369.35 L1520.04,369.99 L1522.13,370.68 L1524.17,371.31 L1526.18,371.82 L1528.16,372.21 L1530.11,372.65 L1532.05,373.04 L1533.98,373.40 L1535.91,373.72 L1537.85,373.99 L1539.80,374.22 L1541.76,374.38 L1543.73,374.46 L1545.69,374.48 L1547.66,374.44 L1549.61,374.36 L1551.56,374.27 L1553.49,374.19 L1555.40,374.12 L1557.29,374.10 L1559.16,374.13 L1561.00,374.22 L1562.99,374.38 L1564.94,374.58 L1566.87,374.81 L1568.77,375.08 L1570.65,375.38 L1572.52,375.72 L1574.37,376.10 L1576.21,376.53 L1578.06,377.01 L1579.90,377.55 L1581.76,378.15 L1583.62,378.81 L1585.50,379.53 L1587.37,380.30 L1589.22,381.11 L1591.05,381.96 L1592.84,382.83 L1594.58,383.72 L1596.27,384.58 L1597.90,385.31 L1600.11,386.68 L1602.20,388.66 L1604.20,390.22 L1606.13,391.49 L1608.01,392.91 L1609.86,394.23 L1611.70,395.40 L1613.51,396.41 L1615.26,397.27 L1616.97,398.01 L1618.65,398.63 L1620.32,399.16 L1622.00,399.58 L1623.70,399.87 L1625.42,400.04 L1627.15,400.05 L1628.88,399.95 L1630.61,399.78 L1632.32,399.60 L1634.02,399.44 L1635.70,399.31 L1637.64,399.18 L1639.56,399.04 L1641.47,398.96 L1643.35,399.02 L1645.19,399.35 L1647.00,399.99 L1648.79,400.97 L1650.58,402.29 L1652.34,403.90 L1654.03,405.72 L1655.63,407.67 L1657.10,409.92 L1659.05,413.55 L1660.77,416.93 L1662.32,421.11 L1663.80,425.48 L1665.66,431.85 L1667.34,438.62 L1668.80,445.00 L1670.59,453.76 L1671.90,461.03 L1672.64,465.89 L1673.00,468.75" stroke="#1b6c4c" stroke-width="1" fill="none" shape-rendering="crispEdges"/><path d="M673.00,657.35 L674.08,656.95 L675.32,655.99 L676.71,654.68 L678.24,652.54 L679.90,650.55 L681.68,648.41 L683.56,646.51 L685.54,644.05 L687.60,641.08 L689.73,638.47 L691.92,635.79 L694.17,633.05 L696.45,630.28 L698.76,627.48 L701.09,624.68 L703.43,621.90 L705.76,619.16 L708.07,616.47 L710.36,613.85 L712.60,611.32 L714.80,608.50 L716.63,606.50 L718.49,604.94 L720.36,602.95 L722.25,600.96 L724.15,598.96 L726.08,596.97 L728.01,594.97 L729.97,592.97 L731.93,590.98 L733.90,588.98 L735.89,586.99 L737.88,585.33 L739.88,583.35 L741.89,581.04 L743.90,579.08 L745.92,577.12 L747.94,575.17 L749.97,573.23 L751.99,571.30 L754.02,569.38 L756.04,567.48 L758.06,565.59 L760.08,563.71 L762.09,561.54 L764.10,559.69 L766.03,558.25 L767.96,556.52 L769.90,554.80 L771.83,553.08 L773.77,551.38 L775.72,549.68 L777.66,548.00 L779.61,546.34 L781.57,544.68 L783.52,543.03 L785.48,541.40 L787.43,539.78 L789.39,538.16 L791.36,536.56 L793.32,534.96 L795.28,533.38 L797.25,531.80 L799.22,530.23 L801.19,528.67 L803.16,527.12 L805.13,525.58 L807.10,524.04 L809.08,522.52 L811.05,520.99 L813.03,519.48 L815.00,517.97 L816.98,516.48 L818.95,515.01 L820.93,513.55 L822.91,512.12 L824.89,510.70 L826.87,509.29 L828.85,507.91 L830.83,506.53 L832.82,505.17 L834.80,503.81 L836.79,502.47 L838.78,501.13 L840.77,499.79 L842.76,498.46 L844.75,497.14 L846.75,495.81 L848.75,494.48 L850.74,493.37 L852.74,492.04 L854.75,490.47 L856.75,489.12 L858.76,487.76 L860.76,486.39 L862.77,485.01 L864.79,483.37 L866.80,481.95 L868.74,480.81 L870.68,479.45 L872.62,478.07 L874.57,476.68 L876.51,475.29 L878.45,473.89 L880.40,472.49 L882.35,471.08 L884.30,469.68 L886.25,468.26 L888.20,466.85 L890.15,465.43 L892.11,464.01 L894.07,462.58 L896.03,461.16 L897.99,459.73 L899.96,458.30 L901.93,456.87 L903.90,455.43 L905.87,454.00 L907.85,452.56 L909.83,451.12 L911.82,449.69 L913.81,448.25 L915.80,446.81 L917.80,445.36 L919.80,443.91 L921.73,442.53 L923.67,441.15 L925.62,439.75 L927.57,438.35 L929.52,436.95 L931.47,435.54 L933.43,434.14 L935.39,432.73 L937.36,431.32 L939.33,429.90 L941.30,428.49 L943.27,427.07 L945.25,425.66 L947.22,424.24 L949.20,422.83 L951.19,421.41 L953.17,420.00 L955.15,418.59 L957.14,417.18 L959.12,415.77 L961.11,414.36 L963.09,412.96 L965.08,411.56 L967.06,410.16 L969.05,408.77 L971.03,407.38 L973.02,406.00 L975.00,404.62 L976.98,403.23 L978.97,401.85 L980.95,400.45 L982.94,399.05 L984.92,397.65 L986.91,396.24 L988.90,394.84 L990.89,393.43 L992.88,392.02 L994.87,390.62 L996.86,389.21 L998.85,387.81 L1000.84,386.42 L1002.84,385.03 L1004.83,383.66 L1006.83,382.29 L1008.82,380.93 L1010.82,379.58 L1012.81,378.25 L1014.81,376.92 L1016.81,375.62 L1018.81,374.33 L1020.80,373.06 L1022.80,371.81 L1024.80,370.58 L1026.80,369.37 L1028.80,368.17 L1030.80,367.01 L1032.73,365.91 L1034.67,364.83 L1036.61,363.75 L1038.56,362.69 L1040.51,361.64 L1042.46,360.61 L1044.41,359.59 L1046.37,358.58 L1048.32,357.59 L1050.28,356.62 L1052.24,355.66 L1054.19,354.71 L1056.15,353.78 L1058.10,352.86 L1060.06,351.96 L1062.01,351.07 L1063.96,350.20 L1065.91,349.34 L1067.85,348.50 L1069.79,347.68 L1071.72,346.87 L1073.65,346.07 L1075.58,345.29 L1077.50,344.53 L1079.41,343.78 L1081.32,343.05 L1083.22,342.34 L1085.11,341.65 L1087.00,341.09 L1089.02,340.37 L1091.03,339.55 L1093.04,338.89 L1095.05,338.24 L1097.06,337.52 L1099.05,336.91 L1101.05,336.43 L1103.04,335.87 L1105.03,335.33 L1107.01,334.81 L1108.98,334.30 L1110.96,333.82 L1112.92,333.35 L1114.89,332.90 L1116.84,332.47 L1118.80,332.05 L1120.74,331.65 L1122.69,331.26 L1124.62,330.90 L1126.55,330.54 L1128.48,330.20 L1130.40,329.87 L1132.31,329.56 L1134.22,329.26 L1136.12,328.97 L1138.01,328.70 L1139.90,328.47 L1141.93,328.20 L1143.96,327.91 L1145.98,327.68 L1147.99,327.48 L1150.00,327.27 L1152.00,327.12 L1153.99,327.00 L1155.98,326.88 L1157.96,326.78 L1159.94,326.69 L1161.90,326.63 L1163.87,326.58 L1165.82,326.54 L1167.77,326.52 L1169.71,326.52 L1171.65,326.53 L1173.58,326.55 L1175.50,326.59 L1177.42,326.64 L1179.33,326.70 L1181.24,326.77 L1183.14,326.85 L1185.03,326.94 L1186.92,327.04 L1188.80,327.12 L1190.84,327.25 L1192.87,327.42 L1194.90,327.59 L1196.92,327.77 L1198.93,327.97 L1200.94,328.23 L1202.94,328.47 L1204.93,328.68 L1206.92,328.95 L1208.90,329.23 L1210.87,329.53 L1212.83,329.84 L1214.78,330.16 L1216.73,330.50 L1218.66,330.85 L1220.59,331.21 L1222.51,331.58 L1224.42,331.96 L1226.31,332.36 L1228.20,332.76 L1230.08,333.18 L1231.94,333.59 L1233.80,333.94 L1235.82,334.43 L1237.83,335.13 L1239.82,335.67 L1241.80,336.14 L1243.77,336.72 L1245.73,337.31 L1247.68,337.92 L1249.62,338.55 L1251.54,339.19 L1253.46,339.83 L1255.36,340.49 L1257.26,341.15 L1259.14,341.82 L1261.02,342.49 L1262.88,343.16 L1264.74,343.83 L1266.59,344.50 L1268.43,345.16 L1270.26,345.81 L1272.08,346.45 L1273.90,347.08 L1275.90,347.78 L1277.89,348.49 L1279.87,349.18 L1281.84,349.88 L1283.80,350.57 L1285.75,351.26 L1287.69,351.95 L1289.61,352.64 L1291.53,353.33 L1293.43,354.02 L1295.32,354.71 L1297.19,355.41 L1299.06,356.10 L1300.90,356.80 L1302.73,357.50 L1304.55,358.20 L1306.35,358.90 L1308.13,359.58 L1309.90,360.15 L1311.97,361.01 L1314.01,362.17 L1316.02,363.05 L1318.00,363.79 L1319.96,364.67 L1321.90,365.56 L1323.82,366.44 L1325.73,367.32 L1327.62,368.19 L1329.50,369.05 L1331.37,369.90 L1333.23,370.73 L1335.10,371.54 L1336.96,372.32 L1338.83,373.07 L1340.70,373.79 L1342.70,374.55 L1344.70,375.28 L1346.69,375.96 L1348.68,376.62 L1350.66,377.26 L1352.63,377.88 L1354.60,378.48 L1356.56,379.07 L1358.51,379.64 L1360.44,380.21 L1362.36,380.77 L1364.27,381.33 L1366.16,381.88 L1368.04,382.43 L1369.90,382.99 L1371.87,383.59 L1373.83,384.19 L1375.77,384.78 L1377.70,385.36 L1379.61,385.93 L1381.50,386.50 L1383.38,387.05 L1385.25,387.60 L1387.10,388.14 L1388.95,388.66 L1390.78,389.18 L1392.59,389.68 L1394.40,390.16 L1396.20,390.55 L1398.29,391.10 L1400.36,391.72 L1402.41,392.23 L1404.46,392.72 L1406.48,393.28 L1408.49,393.74 L1410.48,394.11 L1412.44,394.55 L1414.39,394.97 L1416.32,395.38 L1418.22,395.77 L1420.10,396.15 L1422.12,396.56 L1424.09,396.94 L1426.04,397.29 L1427.96,397.61 L1429.85,397.93 L1431.73,398.24 L1433.59,398.54 L1435.45,398.85 L1437.30,399.16 L1439.15,399.50 L1441.00,399.85 L1442.86,400.22 L1444.71,400.62 L1446.55,401.03 L1448.39,401.46 L1450.21,401.88 L1452.03,402.30 L1453.85,402.71 L1455.65,403.10 L1457.44,403.47 L1459.23,403.80 L1461.00,404.10 L1462.94,404.40 L1464.88,404.67 L1466.81,404.92 L1468.73,405.14 L1470.63,405.34 L1472.52,405.50 L1474.40,405.63 L1476.25,405.73 L1478.09,405.79 L1479.90,405.80 L1481.89,405.77 L1483.84,405.68 L1485.78,405.54 L1487.69,405.36 L1489.58,405.14 L1491.46,404.89 L1493.32,404.63 L1495.16,404.37 L1497.00,404.14 L1499.04,403.82 L1501.06,403.36 L1503.05,402.99 L1505.03,402.67 L1506.99,402.26 L1508.95,401.82 L1510.92,401.35 L1512.90,400.83 L1514.89,400.26 L1516.87,399.64 L1518.85,398.97 L1520.84,398.28 L1522.82,397.59 L1524.81,396.92 L1526.80,396.29 L1528.80,395.71 L1530.59,395.24 L1532.38,394.79 L1534.19,394.34 L1536.00,393.92 L1537.80,393.54 L1539.60,393.22 L1541.39,392.97 L1543.15,392.81 L1544.90,392.75 L1546.85,392.79 L1548.79,392.94 L1550.73,393.19 L1552.64,393.54 L1554.54,393.97 L1556.40,394.48 L1558.22,395.05 L1560.00,395.70 L1561.98,396.54 L1563.93,397.49 L1565.82,398.52 L1567.68,399.65 L1569.49,400.92 L1571.27,402.29 L1573.00,403.84 L1574.97,405.95 L1576.90,408.32 L1578.76,410.80 L1580.57,413.34 L1582.32,415.83 L1584.00,418.31 L1585.91,421.24 L1587.71,424.10 L1589.44,426.81 L1591.12,429.47 L1592.80,432.09 L1594.50,434.70 L1596.21,437.26 L1597.87,439.72 L1599.44,441.92 L1600.90,444.04 L1602.96,446.96 L1604.74,449.39 L1606.60,451.20 L1608.16,452.30 L1609.79,453.02 L1611.40,453.51 L1612.90,453.93 L1614.66,454.35 L1616.27,454.55 L1617.90,454.36 L1619.60,453.64 L1621.30,452.47 L1623.00,451.13 L1624.63,449.56 L1626.26,447.90 L1628.00,446.62 L1629.51,446.09 L1631.15,445.81 L1632.74,445.68 L1634.10,445.60 L1636.18,445.71 L1637.50,445.94" stroke="#202080" stroke-width="1" fill="none" shape-rendering="crispEdges"/><path d="M659.90,573.00 L660.93,573.00 L662.09,573.00 L663.36,573.01 L664.74,573.01 L666.23,573.02 L667.81,573.03 L669.48,573.04 L671.24,573.05 L673.07,573.06 L674.98,573.07 L676.95,573.09 L678.98,573.10 L681.06,573.11 L683.18,573.12 L685.34,573.12 L687.54,573.13 L689.76,573.14 L692.00,573.14 L694.25,573.14 L696.51,573.14 L698.77,573.13 L701.02,573.12 L703.26,573.11 L705.48,573.09 L707.67,573.07 L709.83,573.05 L711.94,573.02 L714.02,572.99 L716.04,572.95 L718.00,572.90 L720.00,572.85 L721.99,572.79 L723.98,572.73 L725.97,572.67 L727.96,572.61 L729.95,572.54 L731.94,572.47 L733.93,572.39 L735.91,572.31 L737.90,572.23 L739.88,572.15 L741.87,572.06 L743.85,571.97 L745.84,571.87 L747.82,571.78 L749.81,571.68 L751.79,571.57 L753.78,571.47 L755.77,571.36 L757.75,571.24 L759.74,571.13 L761.73,571.01 L763.72,570.89 L765.72,570.76 L767.71,570.64 L769.70,570.51 L771.70,570.37 L773.70,570.24 L775.70,570.10 L777.64,569.96 L779.57,569.82 L781.52,569.67 L783.46,569.52 L785.40,569.36 L787.35,569.19 L789.30,569.03 L791.24,568.86 L793.19,568.68 L795.14,568.50 L797.10,568.32 L799.05,568.14 L801.00,567.96 L802.95,567.77 L804.91,567.58 L806.86,567.39 L808.81,567.20 L810.76,567.01 L812.72,566.82 L814.67,566.63 L816.62,566.44 L818.57,566.25 L820.51,566.06 L822.46,565.87 L824.40,565.69 L826.35,565.51 L828.29,565.33 L830.23,565.15 L832.17,564.97 L834.10,564.80 L836.10,564.63 L838.09,564.45 L840.09,564.28 L842.08,564.11 L844.07,563.94 L846.06,563.78 L848.04,563.61 L850.03,563.45 L852.01,563.28 L853.99,563.12 L855.97,562.96 L857.95,562.79 L859.93,562.63 L861.91,562.47 L863.89,562.31 L865.87,562.14 L867.85,561.98 L869.83,561.81 L871.81,561.65 L873.79,561.48 L875.77,561.31 L877.76,561.14 L879.74,560.97 L881.73,560.80 L883.72,560.62 L885.71,560.45 L887.71,560.27 L889.70,560.08 L891.70,559.90 L893.63,559.72 L895.57,559.54 L897.51,559.36 L899.45,559.18 L901.40,559.00 L903.34,558.81 L905.29,558.63 L907.24,558.45 L909.19,558.26 L911.14,558.08 L913.09,557.89 L915.04,557.70 L916.99,557.51 L918.95,557.32 L920.90,557.13 L922.85,556.94 L924.81,556.74 L926.76,556.54 L928.71,556.35 L930.66,556.14 L932.61,555.94 L934.56,555.74 L936.51,555.53 L938.46,555.32 L940.40,555.10 L942.35,554.89 L944.29,554.67 L946.23,554.45 L948.17,554.23 L950.10,554.00 L952.10,553.76 L954.10,553.52 L956.09,553.26 L958.08,553.01 L960.07,552.75 L962.06,552.48 L964.05,552.21 L966.03,551.94 L968.02,551.67 L970.00,551.39 L971.98,551.11 L973.97,550.83 L975.95,550.54 L977.93,550.26 L979.91,549.98 L981.89,549.69 L983.87,549.41 L985.85,549.13 L987.83,548.85 L989.81,548.57 L991.80,548.29 L993.78,548.01 L995.76,547.74 L997.75,547.47 L999.74,547.21 L1001.72,546.95 L1003.71,546.69 L1005.71,546.44 L1007.70,546.20 L1009.63,545.96 L1011.56,545.73 L1013.49,545.48 L1015.42,545.24 L1017.35,544.99 L1019.28,544.75 L1021.22,544.50 L1023.15,544.25 L1025.09,544.00 L1027.02,543.76 L1028.96,543.51 L1030.89,543.27 L1032.83,543.03 L1034.77,542.79 L1036.71,542.56 L1038.64,542.34 L1040.58,542.11 L1042.52,541.90 L1044.46,541.69 L1046.40,541.49 L1048.34,541.30 L1050.28,541.11 L1052.22,540.93 L1054.16,540.77 L1056.10,540.61 L1058.04,540.46 L1059.98,540.33 L1061.92,540.21 L1063.86,540.10 L1065.80,540.00 L1067.74,539.91 L1069.69,539.83 L1071.64,539.75 L1073.60,539.67 L1075.55,539.60 L1077.51,539.53 L1079.48,539.47 L1081.44,539.42 L1083.41,539.37 L1085.37,539.33 L1087.34,539.30 L1089.31,539.28 L1091.27,539.26 L1093.24,539.26 L1095.20,539.26 L1097.16,539.28 L1099.12,539.30 L1101.07,539.34 L1103.02,539.39 L1104.97,539.44 L1106.91,539.52 L1108.85,539.60 L1110.78,539.70 L1112.71,539.81 L1114.62,539.94 L1116.54,540.08 L1118.44,540.23 L1120.33,540.41 L1122.22,540.60 L1124.10,540.80 L1126.11,541.04 L1128.11,541.29 L1130.11,541.56 L1132.10,541.85 L1134.10,542.15 L1136.08,542.46 L1138.07,542.80 L1140.05,543.14 L1142.02,543.51 L1143.99,543.88 L1145.95,544.27 L1147.91,544.68 L1149.86,545.09 L1151.81,545.52 L1153.74,545.97 L1155.68,546.43 L1157.60,546.89 L1159.52,547.38 L1161.42,547.87 L1163.32,548.37 L1165.22,548.89 L1167.10,549.42 L1168.97,549.96 L1170.84,550.50 L1172.69,551.06 L1174.54,551.63 L1176.38,552.21 L1178.20,552.80 L1180.32,553.51 L1182.43,554.24 L1184.52,555.00 L1186.61,555.78 L1188.69,556.59 L1190.75,557.42 L1192.81,558.26 L1194.85,559.13 L1196.89,560.01 L1198.91,560.91 L1200.92,561.81 L1202.92,562.73 L1204.91,563.66 L1206.88,564.59 L1208.85,565.54 L1210.80,566.48 L1212.75,567.43 L1214.68,568.38 L1216.59,569.33 L1218.50,570.27 L1220.39,571.22 L1222.27,572.15 L1224.14,573.08 L1226.00,574.00 L1228.11,575.05 L1230.20,576.12 L1232.27,577.20 L1234.33,578.30 L1236.37,579.40 L1238.39,580.51 L1240.40,581.63 L1242.40,582.74 L1244.38,583.87 L1246.34,584.98 L1248.29,586.10 L1250.23,587.21 L1252.15,588.32 L1254.05,589.42 L1255.94,590.51 L1257.82,591.58 L1259.68,592.64 L1261.53,593.69 L1263.37,594.71 L1265.19,595.72 L1267.00,596.70 L1269.09,597.83 L1271.16,598.95 L1273.20,600.06 L1275.22,601.17 L1277.22,602.26 L1279.19,603.33 L1281.15,604.40 L1283.09,605.44 L1285.01,606.48 L1286.92,607.49 L1288.81,608.48 L1290.69,609.46 L1292.55,610.41 L1294.40,611.34 L1296.24,612.24 L1298.07,613.12 L1299.89,613.97 L1301.70,614.80 L1303.72,615.70 L1305.72,616.56 L1307.70,617.39 L1309.66,618.19 L1311.59,618.96 L1313.52,619.70 L1315.42,620.42 L1317.31,621.11 L1319.19,621.77 L1321.06,622.42 L1322.91,623.04 L1324.76,623.65 L1326.60,624.23 L1328.44,624.80 L1330.27,625.36 L1332.10,625.90 L1334.04,626.44 L1335.98,626.94 L1337.90,627.39 L1339.82,627.81 L1341.72,628.20 L1343.62,628.57 L1345.50,628.92 L1347.37,629.26 L1349.24,629.59 L1351.09,629.93 L1352.93,630.28 L1354.76,630.65 L1356.59,631.03 L1358.40,631.45 L1360.20,631.90 L1362.27,632.45 L1364.34,633.00 L1366.40,633.57 L1368.45,634.15 L1370.48,634.74 L1372.50,635.34 L1374.51,635.96 L1376.49,636.59 L1378.45,637.24 L1380.38,637.90 L1382.29,638.58 L1384.16,639.28 L1386.00,640.00 L1388.13,640.88 L1390.23,641.81 L1392.29,642.77 L1394.32,643.76 L1396.31,644.77 L1398.26,645.79 L1400.19,646.81 L1402.08,647.83 L1403.95,648.84 L1405.79,649.83 L1407.60,650.80 L1409.56,651.86 L1411.46,652.94 L1413.33,654.02 L1415.16,655.10 L1416.96,656.17 L1418.72,657.21 L1420.47,658.22 L1422.19,659.17 L1423.90,660.07 L1425.60,660.90 L1427.69,661.84 L1429.74,662.69 L1431.75,663.46 L1433.72,664.16 L1435.68,664.82 L1437.62,665.43 L1439.56,666.02 L1441.50,666.60 L1443.44,667.15 L1445.37,667.65 L1447.29,668.10 L1449.20,668.53 L1451.10,668.94 L1452.98,669.33 L1454.85,669.71 L1456.70,670.10 L1458.55,670.48 L1460.39,670.82 L1462.23,671.15 L1464.05,671.47 L1465.85,671.79 L1467.61,672.13 L1469.33,672.50 L1471.00,672.90 L1472.85,673.39 L1474.65,673.89 L1476.40,674.42 L1478.11,674.98 L1479.78,675.57 L1481.41,676.21 L1483.00,676.90 L1484.80,677.79 L1486.54,678.75 L1488.22,679.77 L1489.86,680.84 L1491.48,681.92 L1493.10,683.00 L1495.07,684.34 L1497.06,685.76 L1498.99,687.18 L1500.80,688.54 L1502.40,689.80 L1504.46,691.79 L1506.10,693.57 L1507.90,694.80 L1509.53,695.29 L1511.26,695.49 L1513.04,695.35 L1514.80,694.80 L1516.50,693.74 L1518.18,692.24 L1519.90,690.49 L1521.70,688.70 L1523.20,687.22 L1524.72,685.61 L1526.30,683.96 L1527.95,682.36 L1529.70,680.90 L1531.25,679.76 L1532.88,678.63 L1534.56,677.55 L1536.28,676.57 L1538.00,675.74 L1539.70,675.10 L1541.40,674.64 L1543.13,674.33 L1544.87,674.17 L1546.59,674.14 L1548.27,674.26 L1549.90,674.50 L1551.77,675.04 L1553.58,675.84 L1555.35,676.81 L1557.08,677.83 L1558.80,678.80 L1560.54,679.80 L1562.30,680.90 L1564.02,681.99 L1565.64,682.93 L1567.10,683.60 L1569.04,684.04 L1570.66,683.97 L1572.50,683.80 L1574.22,683.66 L1576.10,683.43 L1578.03,683.21 L1579.90,683.10 L1581.72,683.07 L1583.55,683.09 L1585.30,683.24 L1586.90,683.60 L1588.80,684.60 L1590.48,685.94 L1591.90,687.10 L1593.39,688.14 L1594.60,689.00 L1596.03,690.03 L1597.40,691.00 L1598.55,691.71 L1599.60,692.40 L1600.58,693.28 L1601.60,694.20 L1602.82,695.09 L1604.10,696.00 L1605.51,697.06 L1606.60,697.90" stroke="#d49a40" stroke-width="1" fill="none" shape-rendering="crispEdges"/><path d="M659,571h2v4h-2zM658,572h4v2h-4zM717,571h2v4h-2zM716,572h4v2h-4zM775,568h2v4h-2zM774,569h4v2h-4zM833,563h2v4h-2zM832,564h4v2h-4zM891,558h2v4h-2zM890,559h4v2h-4zM949,552h2v4h-2zM948,553h4v2h-4zM1007,544h2v4h-2zM1006,545h4v2h-4zM1065,538h2v4h-2zM1064,539h4v2h-4zM1123,539h2v4h-2zM1122,540h4v2h-4zM1177,551h2v4h-2zM1176,552h4v2h-4zM1225,572h2v4h-2zM1224,573h4v2h-4zM1266,595h2v4h-2zM1265,596h4v2h-4zM1301,613h2v4h-2zM1300,614h4v2h-4zM1331,624h2v4h-2zM1330,625h4v2h-4zM1359,630h2v4h-2zM1358,631h4v2h-4zM1385,638h2v4h-2zM1384,639h4v2h-4zM1407,649h2v4h-2zM1406,650h4v2h-4zM1425,659h2v4h-2zM1424,660h4v2h-4zM1441,665h2v4h-2zM1440,666h4v2h-4zM1456,668h2v4h-2zM1455,669h4v2h-4zM1470,671h2v4h-2zM1469,672h4v2h-4zM1482,675h2v4h-2zM1481,676h4v2h-4zM1492,681h2v4h-2zM1491,682h4v2h-4zM1501,688h2v4h-2zM1500,689h4v2h-4zM1507,693h2v4h-2zM1506,694h4v2h-4zM1514,693h2v4h-2zM1513,694h4v2h-4zM1521,687h2v4h-2zM1520,688h4v2h-4zM1529,679h2v4h-2zM1528,680h4v2h-4zM1539,673h2v4h-2zM1538,674h4v2h-4zM1549,672h2v4h-2zM1548,673h4v2h-4zM1558,677h2v4h-2zM1557,678h4v2h-4zM1566,682h2v4h-2zM1565,683h4v2h-4zM1571,682h2v4h-2zM1570,683h4v2h-4zM1579,681h2v4h-2zM1578,682h4v2h-4zM1586,682h2v4h-2zM1585,683h4v2h-4zM1591,685h2v4h-2zM1590,686h4v2h-4zM1594,687h2v4h-2zM1593,688h4v2h-4zM1596,689h2v4h-2zM1595,690h4v2h-4zM1599,690h2v4h-2zM1598,691h4v2h-4zM1601,692h2v4h-2zM1600,693h4v2h-4zM1603,694h2v4h-2zM1602,695h4v2h-4zM1606,696h2v4h-2zM1605,697h4v2h-4z" fill="#e08c38" shape-rendering="crispEdges"/><path d="M686.90,550.90 L687.95,550.93 L689.11,550.96 L690.39,551.00 L691.77,551.04 L693.26,551.08 L694.84,551.13 L696.51,551.18 L698.26,551.24 L700.09,551.29 L701.99,551.35 L703.96,551.41 L705.98,551.47 L708.06,551.53 L710.19,551.60 L712.36,551.66 L714.57,551.73 L716.81,551.79 L719.07,551.85 L721.35,551.92 L723.64,551.98 L725.94,552.05 L728.24,552.11 L730.53,552.17 L732.82,552.23 L735.08,552.28 L737.33,552.34 L739.55,552.39 L741.73,552.44 L743.87,552.48 L745.97,552.53 L748.01,552.57 L750.00,552.60 L751.96,552.63 L753.91,552.67 L755.87,552.71 L757.82,552.74 L759.77,552.78 L761.73,552.82 L763.68,552.86 L765.63,552.89 L767.58,552.93 L769.53,552.97 L771.48,553.00 L773.42,553.04 L775.37,553.07 L777.31,553.10 L779.26,553.13 L781.20,553.16 L783.14,553.18 L785.08,553.20 L787.02,553.22 L788.96,553.23 L790.90,553.24 L792.83,553.24 L794.76,553.24 L796.70,553.24 L798.63,553.23 L800.56,553.22 L802.49,553.20 L804.41,553.17 L806.34,553.14 L808.26,553.10 L810.18,553.05 L812.10,553.00 L814.08,552.94 L816.05,552.88 L818.03,552.81 L820.00,552.74 L821.96,552.66 L823.93,552.58 L825.89,552.49 L827.85,552.40 L829.81,552.31 L831.76,552.21 L833.72,552.11 L835.67,552.00 L837.62,551.89 L839.57,551.77 L841.52,551.65 L843.47,551.52 L845.42,551.39 L847.37,551.26 L849.32,551.11 L851.27,550.97 L853.22,550.82 L855.18,550.66 L857.13,550.50 L859.08,550.33 L861.03,550.16 L862.99,549.98 L864.95,549.79 L866.91,549.60 L868.87,549.41 L870.83,549.21 L872.80,549.00 L874.77,548.79 L876.74,548.56 L878.71,548.33 L880.68,548.09 L882.65,547.84 L884.62,547.59 L886.59,547.32 L888.57,547.05 L890.54,546.78 L892.52,546.50 L894.49,546.21 L896.47,545.92 L898.44,545.63 L900.42,545.33 L902.40,545.02 L904.38,544.71 L906.36,544.41 L908.33,544.09 L910.31,543.78 L912.29,543.46 L914.28,543.15 L916.26,542.83 L918.24,542.51 L920.22,542.19 L922.20,541.87 L924.18,541.56 L926.17,541.24 L928.15,540.93 L930.13,540.62 L932.12,540.31 L934.10,540.00 L936.08,539.69 L938.07,539.38 L940.05,539.07 L942.03,538.75 L944.01,538.42 L946.00,538.10 L947.98,537.77 L949.96,537.44 L951.94,537.11 L953.92,536.78 L955.91,536.44 L957.89,536.11 L959.87,535.77 L961.86,535.44 L963.84,535.10 L965.83,534.77 L967.82,534.44 L969.81,534.11 L971.80,533.78 L973.79,533.45 L975.78,533.13 L977.77,532.80 L979.77,532.49 L981.77,532.17 L983.76,531.86 L985.76,531.55 L987.77,531.25 L989.77,530.96 L991.78,530.66 L993.79,530.38 L995.80,530.10 L997.75,529.83 L999.71,529.56 L1001.67,529.28 L1003.63,529.01 L1005.59,528.73 L1007.56,528.45 L1009.53,528.17 L1011.50,527.89 L1013.47,527.61 L1015.45,527.34 L1017.43,527.06 L1019.40,526.79 L1021.38,526.53 L1023.36,526.26 L1025.34,526.00 L1027.32,525.75 L1029.31,525.50 L1031.29,525.26 L1033.27,525.03 L1035.25,524.80 L1037.23,524.58 L1039.21,524.37 L1041.19,524.17 L1043.16,523.98 L1045.14,523.80 L1047.11,523.64 L1049.08,523.48 L1051.05,523.34 L1053.02,523.21 L1054.98,523.09 L1056.94,522.99 L1058.90,522.90 L1060.86,522.82 L1062.82,522.75 L1064.78,522.69 L1066.74,522.63 L1068.70,522.58 L1070.66,522.54 L1072.63,522.50 L1074.59,522.47 L1076.55,522.45 L1078.51,522.44 L1080.48,522.44 L1082.44,522.44 L1084.40,522.46 L1086.35,522.49 L1088.31,522.52 L1090.26,522.57 L1092.21,522.63 L1094.16,522.69 L1096.11,522.77 L1098.05,522.87 L1099.99,522.97 L1101.92,523.09 L1103.85,523.22 L1105.78,523.36 L1107.70,523.51 L1109.62,523.68 L1111.53,523.86 L1113.44,524.06 L1115.34,524.27 L1117.23,524.50 L1119.12,524.74 L1121.00,525.00 L1123.00,525.29 L1125.00,525.61 L1127.00,525.94 L1129.00,526.29 L1131.00,526.66 L1132.99,527.05 L1134.98,527.45 L1136.97,527.87 L1138.95,528.30 L1140.93,528.75 L1142.90,529.22 L1144.87,529.69 L1146.83,530.18 L1148.79,530.69 L1150.74,531.20 L1152.69,531.73 L1154.63,532.26 L1156.56,532.81 L1158.49,533.36 L1160.41,533.93 L1162.32,534.50 L1164.22,535.08 L1166.11,535.66 L1168.00,536.25 L1169.87,536.85 L1171.74,537.45 L1173.60,538.06 L1175.44,538.67 L1177.28,539.28 L1179.10,539.90 L1181.19,540.62 L1183.28,541.35 L1185.35,542.10 L1187.42,542.86 L1189.47,543.64 L1191.52,544.43 L1193.56,545.23 L1195.58,546.04 L1197.60,546.86 L1199.60,547.69 L1201.60,548.54 L1203.58,549.39 L1205.55,550.25 L1207.51,551.12 L1209.46,552.00 L1211.40,552.88 L1213.32,553.77 L1215.24,554.67 L1217.14,555.57 L1219.03,556.48 L1220.91,557.39 L1222.77,558.31 L1224.62,559.23 L1226.46,560.15 L1228.29,561.07 L1230.10,562.00 L1232.22,563.11 L1234.33,564.23 L1236.42,565.37 L1238.49,566.53 L1240.54,567.70 L1242.57,568.89 L1244.59,570.08 L1246.59,571.29 L1248.57,572.50 L1250.54,573.72 L1252.49,574.94 L1254.42,576.16 L1256.34,577.38 L1258.25,578.60 L1260.14,579.82 L1262.02,581.03 L1263.88,582.24 L1265.73,583.43 L1267.57,584.62 L1269.39,585.79 L1271.20,586.96 L1273.00,588.10 L1275.07,589.41 L1277.12,590.72 L1279.15,592.02 L1281.16,593.31 L1283.16,594.60 L1285.13,595.88 L1287.09,597.15 L1289.02,598.42 L1290.94,599.68 L1292.84,600.94 L1294.72,602.19 L1296.58,603.44 L1298.41,604.68 L1300.23,605.91 L1302.03,607.14 L1303.80,608.36 L1305.56,609.58 L1307.29,610.79 L1309.00,612.00 L1311.13,613.53 L1313.22,615.06 L1315.27,616.60 L1317.28,618.13 L1319.25,619.66 L1321.19,621.18 L1323.10,622.68 L1324.99,624.17 L1326.85,625.65 L1328.68,627.10 L1330.50,628.52 L1332.29,629.92 L1334.07,631.28 L1335.84,632.61 L1337.60,633.90 L1339.61,635.35 L1341.58,636.78 L1343.53,638.18 L1345.45,639.55 L1347.34,640.89 L1349.20,642.19 L1351.04,643.45 L1352.86,644.67 L1354.65,645.86 L1356.42,646.99 L1358.16,648.08 L1359.89,649.12 L1361.60,650.10 L1363.58,651.19 L1365.52,652.20 L1367.42,653.14 L1369.28,654.01 L1371.11,654.82 L1372.92,655.57 L1374.71,656.28 L1376.49,656.95 L1378.26,657.59 L1380.03,658.21 L1381.80,658.80 L1383.75,659.41 L1385.68,659.96 L1387.59,660.46 L1389.50,660.91 L1391.39,661.32 L1393.27,661.69 L1395.14,662.04 L1397.00,662.37 L1398.85,662.69 L1400.70,663.00 L1402.55,663.29 L1404.41,663.53 L1406.26,663.74 L1408.11,663.92 L1409.94,664.09 L1411.76,664.25 L1413.55,664.41 L1415.31,664.58 L1417.03,664.78 L1418.70,665.00 L1420.72,665.30 L1422.66,665.61 L1424.54,665.93 L1426.38,666.26 L1428.19,666.60 L1430.01,666.98 L1431.84,667.37 L1433.70,667.80 L1435.61,668.24 L1437.54,668.68 L1439.49,669.14 L1441.43,669.62 L1443.36,670.15 L1445.26,670.73 L1447.11,671.38 L1448.90,672.10 L1450.89,673.03 L1452.83,674.06 L1454.74,675.17 L1456.59,676.34 L1458.39,677.57 L1460.12,678.83 L1461.80,680.10 L1463.68,681.69 L1465.49,683.41 L1467.21,685.19 L1468.86,686.93 L1470.42,688.57 L1471.90,690.00 L1473.89,691.94 L1475.64,693.69 L1477.30,695.05 L1479.00,695.80 L1480.71,695.77 L1482.38,695.12 L1484.11,694.11 L1486.00,693.00 L1487.65,691.97 L1489.40,690.72 L1491.22,689.40 L1493.10,688.18 L1495.00,687.20 L1496.65,686.56 L1498.37,686.00 L1500.13,685.54 L1501.86,685.21 L1503.54,685.02 L1505.10,685.00 L1507.25,685.35 L1509.24,686.09 L1511.11,687.05 L1512.90,688.10 L1514.59,689.32 L1516.18,690.74 L1517.70,692.14 L1519.20,693.30 L1521.17,694.38 L1523.07,695.16 L1524.90,695.80 L1526.64,696.37 L1528.32,696.81 L1530.00,697.10 L1531.70,697.21 L1533.41,697.17 L1535.10,697.00 L1536.80,696.62 L1538.50,696.12 L1540.10,695.80 L1541.71,695.83 L1543.24,696.04 L1544.30,696.20" stroke="#642670" stroke-width="1" fill="none" shape-rendering="crispEdges"/><path d="M686,549h2v4h-2zM685,550h4v2h-4zM749,551h2v4h-2zM748,552h4v2h-4zM811,551h2v4h-2zM810,552h4v2h-4zM872,547h2v4h-2zM871,548h4v2h-4zM933,538h2v4h-2zM932,539h4v2h-4zM995,528h2v4h-2zM994,529h4v2h-4zM1058,521h2v4h-2zM1057,522h4v2h-4zM1120,523h2v4h-2zM1119,524h4v2h-4zM1178,538h2v4h-2zM1177,539h4v2h-4zM1229,560h2v4h-2zM1228,561h4v2h-4zM1272,586h2v4h-2zM1271,587h4v2h-4zM1308,610h2v4h-2zM1307,611h4v2h-4zM1337,632h2v4h-2zM1336,633h4v2h-4zM1361,648h2v4h-2zM1360,649h4v2h-4zM1381,657h2v4h-2zM1380,658h4v2h-4zM1400,661h2v4h-2zM1399,662h4v2h-4zM1418,663h2v4h-2zM1417,664h4v2h-4zM1433,666h2v4h-2zM1432,667h4v2h-4zM1448,670h2v4h-2zM1447,671h4v2h-4zM1461,678h2v4h-2zM1460,679h4v2h-4zM1471,688h2v4h-2zM1470,689h4v2h-4zM1478,694h2v4h-2zM1477,695h4v2h-4zM1485,691h2v4h-2zM1484,692h4v2h-4zM1494,685h2v4h-2zM1493,686h4v2h-4zM1504,683h2v4h-2zM1503,684h4v2h-4zM1512,686h2v4h-2zM1511,687h4v2h-4zM1518,691h2v4h-2zM1517,692h4v2h-4zM1524,694h2v4h-2zM1523,695h4v2h-4zM1529,695h2v4h-2zM1528,696h4v2h-4zM1534,695h2v4h-2zM1533,696h4v2h-4zM1539,694h2v4h-2zM1538,695h4v2h-4zM1543,694h2v4h-2zM1542,695h4v2h-4z" fill="#5c1060" shape-rendering="crispEdges"/><path d="M686.90,573.90 L687.99,573.61 L689.33,573.26 L690.89,572.84 L692.63,572.38 L694.52,571.88 L696.55,571.34 L698.67,570.77 L700.86,570.20 L703.09,569.61 L705.33,569.03 L707.55,568.46 L709.72,567.91 L711.81,567.39 L713.80,566.90 L715.72,566.44 L717.64,565.98 L719.57,565.53 L721.49,565.09 L723.42,564.65 L725.34,564.21 L727.26,563.78 L729.19,563.36 L731.11,562.94 L733.03,562.52 L734.95,562.11 L736.87,561.70 L738.78,561.30 L740.70,560.90 L742.61,560.51 L744.52,560.12 L746.43,559.73 L748.34,559.35 L750.25,558.97 L752.16,558.60 L754.06,558.23 L755.97,557.87 L757.87,557.51 L759.78,557.16 L761.68,556.81 L763.59,556.47 L765.49,556.13 L767.40,555.80 L769.31,555.48 L771.21,555.16 L773.11,554.85 L775.00,554.55 L776.90,554.25 L778.80,553.96 L780.69,553.67 L782.59,553.38 L784.50,553.10 L786.41,552.82 L788.32,552.54 L790.24,552.26 L792.17,551.98 L794.10,551.70 L796.04,551.42 L798.00,551.14 L799.96,550.87 L801.93,550.60 L803.91,550.33 L805.89,550.06 L807.88,549.79 L809.86,549.53 L811.84,549.26 L813.82,548.99 L815.80,548.72 L817.78,548.45 L819.74,548.18 L821.70,547.90 L823.65,547.62 L825.60,547.34 L827.54,547.06 L829.48,546.77 L831.41,546.49 L833.34,546.20 L835.27,545.92 L837.20,545.63 L839.13,545.34 L841.06,545.06 L843.00,544.77 L844.93,544.48 L846.86,544.19 L848.80,543.90 L850.74,543.61 L852.68,543.33 L854.63,543.04 L856.58,542.76 L858.52,542.47 L860.47,542.19 L862.42,541.90 L864.37,541.61 L866.31,541.32 L868.25,541.03 L870.20,540.73 L872.13,540.42 L874.07,540.11 L876.00,539.80 L877.93,539.48 L879.85,539.15 L881.76,538.81 L883.67,538.47 L885.58,538.12 L887.49,537.77 L889.40,537.41 L891.31,537.06 L893.22,536.71 L895.13,536.36 L897.04,536.01 L898.95,535.67 L900.87,535.33 L902.80,535.00 L904.73,534.68 L906.67,534.36 L908.61,534.05 L910.56,533.75 L912.51,533.45 L914.46,533.15 L916.41,532.85 L918.36,532.55 L920.31,532.25 L922.25,531.95 L924.20,531.65 L926.14,531.34 L928.07,531.02 L930.00,530.70 L931.92,530.37 L933.84,530.04 L935.75,529.71 L937.65,529.37 L939.56,529.03 L941.46,528.69 L943.36,528.35 L945.26,528.00 L947.16,527.66 L949.06,527.31 L950.96,526.96 L952.87,526.61 L954.78,526.25 L956.70,525.90 L958.62,525.54 L960.55,525.18 L962.48,524.80 L964.41,524.43 L966.34,524.05 L968.28,523.67 L970.22,523.29 L972.16,522.91 L974.10,522.54 L976.04,522.17 L977.98,521.81 L979.92,521.46 L981.86,521.12 L983.80,520.80 L985.74,520.48 L987.68,520.17 L989.62,519.87 L991.56,519.57 L993.51,519.28 L995.45,519.00 L997.39,518.72 L999.34,518.45 L1001.28,518.19 L1003.23,517.93 L1005.17,517.69 L1007.11,517.45 L1009.06,517.22 L1011.00,517.00 L1012.94,516.79 L1014.89,516.60 L1016.84,516.42 L1018.79,516.25 L1020.73,516.09 L1022.68,515.93 L1024.63,515.79 L1026.58,515.64 L1028.52,515.51 L1030.47,515.37 L1032.40,515.23 L1034.34,515.09 L1036.27,514.95 L1038.20,514.80 L1040.12,514.64 L1042.04,514.48 L1043.95,514.30 L1045.85,514.12 L1047.75,513.94 L1049.65,513.77 L1051.55,513.59 L1053.45,513.43 L1055.35,513.28 L1057.25,513.14 L1059.15,513.02 L1061.06,512.92 L1062.98,512.85 L1064.90,512.80 L1066.83,512.78 L1068.76,512.78 L1070.71,512.80 L1072.65,512.83 L1074.60,512.89 L1076.55,512.95 L1078.51,513.04 L1080.46,513.13 L1082.41,513.24 L1084.36,513.36 L1086.30,513.48 L1088.24,513.62 L1090.17,513.76 L1092.10,513.90 L1094.02,514.05 L1095.93,514.21 L1097.83,514.38 L1099.73,514.56 L1101.62,514.75 L1103.51,514.95 L1105.40,515.16 L1107.29,515.37 L1109.18,515.60 L1111.07,515.84 L1112.97,516.09 L1114.87,516.35 L1116.78,516.62 L1118.70,516.90 L1120.62,517.19 L1122.55,517.49 L1124.49,517.80 L1126.43,518.13 L1128.37,518.46 L1130.32,518.80 L1132.26,519.16 L1134.21,519.52 L1136.16,519.89 L1138.11,520.27 L1140.06,520.67 L1142.01,521.07 L1143.96,521.48 L1145.90,521.90 L1147.84,522.33 L1149.79,522.77 L1151.74,523.21 L1153.69,523.67 L1155.63,524.13 L1157.58,524.61 L1159.53,525.09 L1161.48,525.59 L1163.42,526.10 L1165.37,526.61 L1167.30,527.14 L1169.24,527.68 L1171.17,528.23 L1173.10,528.80 L1175.02,529.38 L1176.94,529.96 L1178.85,530.55 L1180.75,531.16 L1182.65,531.77 L1184.55,532.39 L1186.45,533.03 L1188.35,533.68 L1190.25,534.35 L1192.15,535.02 L1194.05,535.72 L1195.96,536.43 L1197.88,537.16 L1199.80,537.90 L1201.73,538.67 L1203.66,539.45 L1205.60,540.26 L1207.54,541.09 L1209.48,541.93 L1211.43,542.79 L1213.38,543.66 L1215.32,544.54 L1217.27,545.43 L1219.22,546.32 L1221.17,547.22 L1223.12,548.11 L1225.06,549.01 L1227.00,549.90 L1228.94,550.79 L1230.88,551.70 L1232.82,552.60 L1234.76,553.52 L1236.70,554.44 L1238.64,555.37 L1240.58,556.29 L1242.52,557.22 L1244.46,558.16 L1246.39,559.09 L1248.32,560.02 L1250.25,560.95 L1252.18,561.88 L1254.10,562.80 L1256.02,563.72 L1257.93,564.63 L1259.84,565.54 L1261.74,566.44 L1263.64,567.35 L1265.54,568.26 L1267.44,569.16 L1269.34,570.07 L1271.24,570.99 L1273.15,571.91 L1275.05,572.84 L1276.96,573.78 L1278.88,574.74 L1280.80,575.70 L1282.73,576.68 L1284.66,577.69 L1286.60,578.71 L1288.55,579.75 L1290.49,580.80 L1292.44,581.86 L1294.39,582.91 L1296.34,583.97 L1298.29,585.01 L1300.24,586.05 L1302.19,587.07 L1304.13,588.07 L1306.07,589.05 L1308.00,590.00 L1309.93,590.93 L1311.85,591.83 L1313.77,592.72 L1315.69,593.60 L1317.60,594.46 L1319.51,595.31 L1321.43,596.15 L1323.34,596.98 L1325.24,597.81 L1327.15,598.63 L1329.06,599.45 L1330.97,600.26 L1332.89,601.08 L1334.80,601.90 L1336.71,602.72 L1338.62,603.55 L1340.53,604.37 L1342.44,605.19 L1344.35,606.01 L1346.26,606.82 L1348.17,607.63 L1350.08,608.43 L1351.99,609.22 L1353.91,610.00 L1355.82,610.77 L1357.75,611.53 L1359.67,612.27 L1361.60,613.00 L1363.54,613.71 L1365.48,614.40 L1367.42,615.07 L1369.37,615.73 L1371.33,616.37 L1373.28,617.01 L1375.24,617.64 L1377.19,618.26 L1379.15,618.88 L1381.11,619.50 L1383.06,620.12 L1385.01,620.74 L1386.96,621.37 L1388.90,622.00 L1390.84,622.64 L1392.77,623.28 L1394.71,623.93 L1396.64,624.57 L1398.56,625.22 L1400.49,625.86 L1402.42,626.51 L1404.34,627.15 L1406.27,627.78 L1408.19,628.42 L1410.12,629.05 L1412.05,629.67 L1413.97,630.29 L1415.90,630.90 L1417.83,631.50 L1419.76,632.09 L1421.69,632.66 L1423.62,633.23 L1425.55,633.79 L1427.48,634.35 L1429.41,634.91 L1431.34,635.47 L1433.26,636.03 L1435.19,636.60 L1437.12,637.18 L1439.05,637.77 L1440.97,638.38 L1442.90,639.00 L1444.86,639.65 L1446.88,640.34 L1448.95,641.05 L1451.04,641.78 L1453.14,642.52 L1455.23,643.27 L1457.31,644.01 L1459.34,644.75 L1461.32,645.47 L1463.23,646.17 L1465.04,646.84 L1466.76,647.47 L1468.35,648.06 L1469.80,648.60 L1472.59,649.70 L1474.69,650.64 L1476.37,651.44 L1477.90,652.14 L1479.52,652.75 L1481.50,653.30 L1483.26,653.64 L1485.14,653.89 L1487.10,654.06 L1489.11,654.21 L1491.12,654.34 L1493.09,654.50 L1495.00,654.71 L1496.80,655.00 L1498.75,655.45 L1500.65,655.99 L1502.49,656.58 L1504.26,657.19 L1505.97,657.79 L1507.62,658.34 L1509.20,658.80 L1511.30,659.33 L1513.28,659.79 L1515.13,660.18 L1516.84,660.48 L1518.40,660.70 L1520.52,660.82 L1522.24,660.72 L1524.00,660.60 L1525.66,660.57 L1527.36,660.53 L1529.90,660.30 L1531.55,660.10 L1533.60,659.82 L1535.86,659.50 L1538.16,659.17 L1540.31,658.85 L1542.11,658.59 L1543.40,658.40" stroke="#b03636" stroke-width="1" fill="none" shape-rendering="crispEdges"/><path d="M686,572h2v4h-2zM685,573h4v2h-4zM713,565h2v4h-2zM712,566h4v2h-4zM740,559h2v4h-2zM739,560h4v2h-4zM766,554h2v4h-2zM765,555h4v2h-4zM793,550h2v4h-2zM792,551h4v2h-4zM821,546h2v4h-2zM820,547h4v2h-4zM848,542h2v4h-2zM847,543h4v2h-4zM875,538h2v4h-2zM874,539h4v2h-4zM902,533h2v4h-2zM901,534h4v2h-4zM929,529h2v4h-2zM928,530h4v2h-4zM956,524h2v4h-2zM955,525h4v2h-4zM983,519h2v4h-2zM982,520h4v2h-4zM1010,515h2v4h-2zM1009,516h4v2h-4zM1037,513h2v4h-2zM1036,514h4v2h-4zM1064,511h2v4h-2zM1063,512h4v2h-4zM1091,512h2v4h-2zM1090,513h4v2h-4zM1118,515h2v4h-2zM1117,516h4v2h-4zM1145,520h2v4h-2zM1144,521h4v2h-4zM1172,527h2v4h-2zM1171,528h4v2h-4zM1199,536h2v4h-2zM1198,537h4v2h-4zM1226,548h2v4h-2zM1225,549h4v2h-4zM1253,561h2v4h-2zM1252,562h4v2h-4zM1280,574h2v4h-2zM1279,575h4v2h-4zM1307,588h2v4h-2zM1306,589h4v2h-4zM1334,600h2v4h-2zM1333,601h4v2h-4zM1361,611h2v4h-2zM1360,612h4v2h-4zM1388,620h2v4h-2zM1387,621h4v2h-4zM1415,629h2v4h-2zM1414,630h4v2h-4zM1442,637h2v4h-2zM1441,638h4v2h-4zM1469,647h2v4h-2zM1468,648h4v2h-4zM1496,653h2v4h-2zM1495,654h4v2h-4zM1523,659h2v4h-2zM1522,660h4v2h-4z" fill="#c41c28" shape-rendering="crispEdges"/><path d="M628.80,571.80 L629.85,571.70 L631.02,571.59 L632.30,571.47 L633.70,571.34 L635.19,571.21 L636.79,571.07 L638.47,570.92 L640.25,570.76 L642.09,570.60 L644.01,570.43 L646.00,570.25 L648.05,570.07 L650.14,569.88 L652.29,569.68 L654.47,569.48 L656.69,569.28 L658.94,569.07 L661.21,568.85 L663.49,568.63 L665.79,568.41 L668.08,568.18 L670.37,567.95 L672.65,567.71 L674.92,567.48 L677.16,567.24 L679.37,566.99 L681.55,566.75 L683.68,566.50 L685.77,566.25 L687.80,566.00 L689.74,565.75 L691.68,565.50 L693.63,565.25 L695.58,564.99 L697.53,564.73 L699.48,564.46 L701.43,564.19 L703.39,563.91 L705.35,563.63 L707.32,563.35 L709.28,563.06 L711.25,562.77 L713.22,562.48 L715.19,562.18 L717.16,561.88 L719.14,561.58 L721.12,561.27 L723.10,560.96 L725.08,560.65 L727.06,560.33 L729.05,560.02 L731.03,559.69 L733.02,559.37 L735.02,559.05 L737.01,558.72 L739.00,558.39 L741.00,558.05 L743.00,557.72 L745.00,557.38 L747.00,557.04 L749.00,556.70 L750.94,556.37 L752.88,556.03 L754.83,555.69 L756.78,555.34 L758.72,555.00 L760.67,554.64 L762.62,554.29 L764.58,553.93 L766.53,553.57 L768.49,553.21 L770.45,552.84 L772.41,552.47 L774.37,552.10 L776.33,551.73 L778.30,551.35 L780.26,550.98 L782.23,550.60 L784.20,550.22 L786.17,549.83 L788.15,549.45 L790.13,549.07 L792.10,548.68 L794.08,548.29 L796.07,547.91 L798.05,547.52 L800.04,547.13 L802.03,546.74 L804.02,546.35 L806.01,545.96 L808.00,545.58 L810.00,545.19 L812.00,544.80 L813.94,544.42 L815.88,544.05 L817.83,543.68 L819.78,543.30 L821.73,542.93 L823.68,542.56 L825.64,542.18 L827.60,541.81 L829.56,541.44 L831.52,541.06 L833.49,540.69 L835.45,540.31 L837.42,539.94 L839.39,539.56 L841.36,539.18 L843.33,538.80 L845.31,538.41 L847.28,538.03 L849.26,537.64 L851.23,537.25 L853.21,536.86 L855.19,536.47 L857.17,536.07 L859.15,535.67 L861.14,535.27 L863.12,534.86 L865.10,534.45 L867.08,534.03 L869.07,533.62 L871.05,533.19 L873.03,532.77 L875.02,532.34 L877.00,531.90 L878.98,531.46 L880.96,531.01 L882.95,530.55 L884.93,530.09 L886.91,529.62 L888.89,529.15 L890.86,528.67 L892.84,528.19 L894.82,527.70 L896.80,527.21 L898.79,526.72 L900.77,526.22 L902.75,525.72 L904.73,525.22 L906.72,524.72 L908.71,524.21 L910.69,523.71 L912.69,523.21 L914.68,522.70 L916.67,522.20 L918.67,521.69 L920.67,521.19 L922.67,520.69 L924.68,520.20 L926.69,519.70 L928.70,519.21 L930.72,518.72 L932.74,518.24 L934.76,517.76 L936.79,517.29 L938.82,516.82 L940.86,516.36 L942.90,515.90 L944.83,515.47 L946.76,515.04 L948.70,514.60 L950.64,514.15 L952.59,513.71 L954.53,513.26 L956.49,512.81 L958.44,512.36 L960.40,511.91 L962.36,511.46 L964.32,511.01 L966.29,510.56 L968.26,510.11 L970.23,509.67 L972.20,509.22 L974.18,508.79 L976.15,508.35 L978.13,507.92 L980.11,507.50 L982.10,507.08 L984.08,506.67 L986.06,506.27 L988.05,505.88 L990.04,505.49 L992.02,505.12 L994.01,504.75 L996.00,504.39 L997.99,504.05 L999.97,503.72 L1001.96,503.40 L1003.95,503.09 L1005.94,502.79 L1007.93,502.51 L1009.91,502.25 L1011.90,502.00 L1013.83,501.77 L1015.77,501.55 L1017.71,501.33 L1019.66,501.13 L1021.61,500.93 L1023.56,500.74 L1025.51,500.56 L1027.47,500.39 L1029.43,500.23 L1031.39,500.07 L1033.35,499.93 L1035.31,499.79 L1037.28,499.66 L1039.24,499.54 L1041.21,499.43 L1043.17,499.32 L1045.14,499.23 L1047.10,499.14 L1049.06,499.06 L1051.02,498.99 L1052.98,498.93 L1054.94,498.87 L1056.89,498.83 L1058.84,498.79 L1060.79,498.76 L1062.73,498.74 L1064.67,498.73 L1066.61,498.72 L1068.54,498.73 L1070.46,498.74 L1072.39,498.76 L1074.30,498.80 L1076.21,498.83 L1078.11,498.88 L1080.01,498.94 L1081.90,499.00 L1083.96,499.08 L1086.01,499.17 L1088.06,499.28 L1090.10,499.40 L1092.14,499.53 L1094.18,499.67 L1096.21,499.82 L1098.24,499.98 L1100.27,500.16 L1102.29,500.34 L1104.31,500.54 L1106.33,500.74 L1108.34,500.96 L1110.34,501.18 L1112.35,501.41 L1114.35,501.66 L1116.34,501.91 L1118.33,502.17 L1120.32,502.44 L1122.30,502.71 L1124.28,502.99 L1126.26,503.29 L1128.23,503.58 L1130.19,503.89 L1132.16,504.20 L1134.11,504.52 L1136.07,504.84 L1138.02,505.17 L1139.96,505.51 L1141.90,505.85 L1143.84,506.19 L1145.77,506.54 L1147.70,506.90 L1149.75,507.29 L1151.80,507.69 L1153.84,508.10 L1155.88,508.53 L1157.92,508.96 L1159.96,509.41 L1161.99,509.87 L1164.02,510.33 L1166.05,510.81 L1168.07,511.30 L1170.08,511.79 L1172.10,512.29 L1174.10,512.80 L1176.10,513.32 L1178.10,513.84 L1180.09,514.36 L1182.07,514.90 L1184.05,515.43 L1186.02,515.98 L1187.98,516.52 L1189.93,517.07 L1191.88,517.62 L1193.82,518.17 L1195.75,518.72 L1197.67,519.28 L1199.58,519.84 L1201.49,520.39 L1203.38,520.95 L1205.26,521.50 L1207.14,522.05 L1209.00,522.60 L1211.13,523.23 L1213.24,523.88 L1215.34,524.53 L1217.43,525.19 L1219.51,525.85 L1221.57,526.52 L1223.63,527.20 L1225.67,527.88 L1227.70,528.56 L1229.73,529.25 L1231.74,529.94 L1233.74,530.64 L1235.74,531.33 L1237.72,532.03 L1239.70,532.73 L1241.67,533.42 L1243.63,534.12 L1245.59,534.81 L1247.53,535.51 L1249.47,536.20 L1251.41,536.88 L1253.34,537.57 L1255.26,538.25 L1257.18,538.92 L1259.09,539.59 L1261.00,540.25 L1262.90,540.90 L1264.95,541.60 L1266.99,542.31 L1269.02,543.01 L1271.05,543.71 L1273.06,544.41 L1275.07,545.11 L1277.06,545.81 L1279.05,546.51 L1281.03,547.21 L1283.01,547.90 L1284.97,548.59 L1286.93,549.28 L1288.88,549.96 L1290.82,550.64 L1292.76,551.31 L1294.68,551.98 L1296.60,552.64 L1298.51,553.30 L1300.42,553.95 L1302.32,554.59 L1304.21,555.23 L1306.09,555.86 L1307.97,556.48 L1309.84,557.10 L1311.70,557.70 L1313.72,558.35 L1315.73,558.99 L1317.73,559.61 L1319.72,560.24 L1321.71,560.85 L1323.69,561.45 L1325.66,562.05 L1327.62,562.64 L1329.57,563.22 L1331.51,563.80 L1333.45,564.37 L1335.37,564.94 L1337.29,565.50 L1339.20,566.05 L1341.09,566.61 L1342.98,567.15 L1344.86,567.70 L1346.72,568.24 L1348.58,568.77 L1350.43,569.31 L1352.26,569.84 L1354.09,570.37 L1355.90,570.90 L1357.97,571.50 L1360.02,572.10 L1362.06,572.70 L1364.08,573.29 L1366.09,573.87 L1368.08,574.45 L1370.06,575.02 L1372.02,575.59 L1373.98,576.15 L1375.92,576.71 L1377.85,577.26 L1379.77,577.81 L1381.69,578.35 L1383.59,578.89 L1385.49,579.42 L1387.38,579.95 L1389.27,580.47 L1391.15,580.98 L1393.03,581.49 L1394.90,582.00 L1396.98,582.55 L1399.04,583.09 L1401.10,583.61 L1403.16,584.12 L1405.20,584.63 L1407.23,585.12 L1409.25,585.61 L1411.27,586.09 L1413.27,586.57 L1415.26,587.05 L1417.24,587.53 L1419.21,588.01 L1421.17,588.49 L1423.12,588.98 L1425.06,589.47 L1426.99,589.97 L1428.90,590.48 L1430.80,591.00 L1432.80,591.56 L1434.79,592.12 L1436.76,592.69 L1438.72,593.25 L1440.66,593.83 L1442.60,594.40 L1444.52,594.98 L1446.43,595.56 L1448.33,596.15 L1450.21,596.74 L1452.09,597.33 L1453.95,597.92 L1455.80,598.51 L1457.64,599.11 L1459.47,599.70 L1461.29,600.30 L1463.10,600.90 L1465.14,601.58 L1467.16,602.28 L1469.16,602.98 L1471.15,603.69 L1473.13,604.40 L1475.09,605.11 L1477.04,605.82 L1478.97,606.54 L1480.89,607.25 L1482.79,607.96 L1484.68,608.66 L1486.56,609.36 L1488.42,610.05 L1490.27,610.73 L1492.10,611.40 L1494.20,612.17 L1496.28,612.94 L1498.35,613.71 L1500.40,614.48 L1502.43,615.24 L1504.45,616.00 L1506.44,616.74 L1508.41,617.47 L1510.35,618.18 L1512.28,618.87 L1514.18,619.54 L1516.05,620.18 L1517.90,620.80 L1520.04,621.49 L1522.13,622.16 L1524.17,622.79 L1526.18,623.40 L1528.16,623.99 L1530.11,624.54 L1532.05,625.08 L1533.98,625.59 L1535.91,626.08 L1537.85,626.55 L1539.80,627.00 L1541.76,627.42 L1543.73,627.78 L1545.69,628.12 L1547.66,628.42 L1549.61,628.71 L1551.56,628.98 L1553.49,629.25 L1555.40,629.53 L1557.29,629.83 L1559.16,630.15 L1561.00,630.50 L1562.99,630.91 L1564.94,631.33 L1566.87,631.76 L1568.77,632.20 L1570.65,632.65 L1572.52,633.12 L1574.37,633.61 L1576.21,634.11 L1578.06,634.64 L1579.90,635.20 L1581.76,635.79 L1583.62,636.41 L1585.50,637.06 L1587.37,637.73 L1589.22,638.41 L1591.05,639.11 L1592.84,639.81 L1594.58,640.52 L1596.27,641.21 L1597.90,641.90 L1600.11,642.90 L1602.20,643.94 L1604.20,645.00 L1606.13,646.04 L1608.01,647.04 L1609.86,647.97 L1611.70,648.80 L1613.51,649.54 L1615.26,650.21 L1616.97,650.81 L1618.65,651.36 L1620.32,651.86 L1622.00,652.30 L1623.70,652.70 L1625.42,653.03 L1627.15,653.27 L1628.88,653.45 L1630.61,653.60 L1632.32,653.74 L1634.02,653.90 L1635.70,654.10 L1637.64,654.33 L1639.56,654.51 L1641.47,654.71 L1643.35,654.97 L1645.19,655.35 L1647.00,655.90 L1648.79,656.63 L1650.58,657.50 L1652.34,658.49 L1654.03,659.57 L1655.63,660.72 L1657.10,661.90 L1659.05,663.78 L1660.77,665.82 L1662.32,667.97 L1663.80,670.20 L1665.66,673.40 L1667.34,676.76 L1668.80,679.90 L1670.59,684.17 L1671.90,687.70 L1672.64,690.04 L1673.00,691.40" stroke="#1b6c4c" stroke-width="1" fill="none" shape-rendering="crispEdges"/><path d="M628,570h2v4h-2zM627,571h4v2h-4zM687,564h2v4h-2zM686,565h4v2h-4zM748,555h2v4h-2zM747,556h4v2h-4zM811,543h2v4h-2zM810,544h4v2h-4zM876,530h2v4h-2zM875,531h4v2h-4zM942,514h2v4h-2zM941,515h4v2h-4zM1011,500h2v4h-2zM1010,501h4v2h-4zM1081,497h2v4h-2zM1080,498h4v2h-4zM1147,505h2v4h-2zM1146,506h4v2h-4zM1208,521h2v4h-2zM1207,522h4v2h-4zM1262,539h2v4h-2zM1261,540h4v2h-4zM1311,556h2v4h-2zM1310,557h4v2h-4zM1355,569h2v4h-2zM1354,570h4v2h-4zM1394,580h2v4h-2zM1393,581h4v2h-4zM1430,589h2v4h-2zM1429,590h4v2h-4zM1462,599h2v4h-2zM1461,600h4v2h-4zM1491,609h2v4h-2zM1490,610h4v2h-4zM1517,619h2v4h-2zM1516,620h4v2h-4zM1539,625h2v4h-2zM1538,626h4v2h-4zM1560,628h2v4h-2zM1559,629h4v2h-4zM1579,633h2v4h-2zM1578,634h4v2h-4zM1597,640h2v4h-2zM1596,641h4v2h-4zM1611,647h2v4h-2zM1610,648h4v2h-4zM1623,651h2v4h-2zM1622,652h4v2h-4zM1635,652h2v4h-2zM1634,653h4v2h-4zM1646,654h2v4h-2zM1645,655h4v2h-4zM1656,660h2v4h-2zM1655,661h4v2h-4zM1663,668h2v4h-2zM1662,669h4v2h-4zM1668,678h2v4h-2zM1667,679h4v2h-4zM1671,686h2v4h-2zM1670,687h4v2h-4zM1672,689h2v4h-2zM1671,690h4v2h-4z" fill="#0d6a42" shape-rendering="crispEdges"/><path d="M673.00,619.10 L674.08,618.07 L675.32,616.86 L676.71,615.49 L678.24,613.96 L679.90,612.30 L681.68,610.52 L683.56,608.63 L685.54,606.66 L687.60,604.61 L689.73,602.51 L691.92,600.36 L694.17,598.19 L696.45,596.00 L698.76,593.82 L701.09,591.66 L703.43,589.54 L705.76,587.47 L708.07,585.46 L710.36,583.54 L712.60,581.71 L714.80,580.00 L716.63,578.62 L718.49,577.25 L720.36,575.89 L722.25,574.55 L724.15,573.21 L726.08,571.89 L728.01,570.58 L729.97,569.29 L731.93,568.01 L733.90,566.75 L735.89,565.50 L737.88,564.26 L739.88,563.04 L741.89,561.84 L743.90,560.65 L745.92,559.48 L747.94,558.33 L749.97,557.20 L751.99,556.08 L754.02,554.99 L756.04,553.91 L758.06,552.85 L760.08,551.81 L762.09,550.80 L764.10,549.80 L766.03,548.86 L767.96,547.94 L769.90,547.05 L771.83,546.17 L773.77,545.31 L775.72,544.46 L777.66,543.64 L779.61,542.83 L781.57,542.04 L783.52,541.26 L785.48,540.50 L787.43,539.76 L789.39,539.03 L791.36,538.32 L793.32,537.62 L795.28,536.93 L797.25,536.26 L799.22,535.59 L801.19,534.94 L803.16,534.31 L805.13,533.68 L807.10,533.06 L809.08,532.46 L811.05,531.86 L813.03,531.28 L815.00,530.70 L816.98,530.14 L818.95,529.60 L820.93,529.09 L822.91,528.60 L824.89,528.12 L826.87,527.67 L828.85,527.23 L830.83,526.80 L832.82,526.39 L834.80,525.99 L836.79,525.60 L838.78,525.22 L840.77,524.85 L842.76,524.48 L844.75,524.12 L846.75,523.76 L848.75,523.40 L850.74,523.05 L852.74,522.69 L854.75,522.32 L856.75,521.96 L858.76,521.58 L860.76,521.20 L862.77,520.81 L864.79,520.41 L866.80,520.00 L868.74,519.59 L870.68,519.19 L872.62,518.78 L874.57,518.36 L876.51,517.95 L878.45,517.54 L880.40,517.12 L882.35,516.70 L884.30,516.28 L886.25,515.86 L888.20,515.44 L890.15,515.02 L892.11,514.60 L894.07,514.18 L896.03,513.77 L897.99,513.35 L899.96,512.93 L901.93,512.52 L903.90,512.11 L905.87,511.70 L907.85,511.29 L909.83,510.88 L911.82,510.48 L913.81,510.08 L915.80,509.68 L917.80,509.29 L919.80,508.90 L921.73,508.53 L923.67,508.15 L925.62,507.78 L927.57,507.41 L929.52,507.04 L931.47,506.67 L933.43,506.30 L935.39,505.93 L937.36,505.56 L939.33,505.20 L941.30,504.83 L943.27,504.47 L945.25,504.11 L947.22,503.76 L949.20,503.40 L951.19,503.05 L953.17,502.70 L955.15,502.35 L957.14,502.01 L959.12,501.67 L961.11,501.34 L963.09,501.00 L965.08,500.68 L967.06,500.35 L969.05,500.03 L971.03,499.72 L973.02,499.41 L975.00,499.10 L976.98,498.79 L978.97,498.48 L980.95,498.17 L982.94,497.85 L984.92,497.54 L986.91,497.22 L988.90,496.90 L990.89,496.59 L992.88,496.27 L994.87,495.96 L996.86,495.65 L998.85,495.35 L1000.84,495.05 L1002.84,494.76 L1004.83,494.48 L1006.83,494.21 L1008.82,493.94 L1010.82,493.69 L1012.81,493.44 L1014.81,493.21 L1016.81,492.99 L1018.81,492.79 L1020.80,492.60 L1022.80,492.42 L1024.80,492.27 L1026.80,492.12 L1028.80,492.00 L1030.80,491.90 L1032.73,491.82 L1034.67,491.75 L1036.61,491.69 L1038.56,491.64 L1040.51,491.60 L1042.46,491.58 L1044.41,491.57 L1046.37,491.57 L1048.32,491.58 L1050.28,491.60 L1052.24,491.63 L1054.19,491.68 L1056.15,491.73 L1058.10,491.80 L1060.06,491.87 L1062.01,491.95 L1063.96,492.05 L1065.91,492.15 L1067.85,492.27 L1069.79,492.39 L1071.72,492.52 L1073.65,492.67 L1075.58,492.82 L1077.50,492.98 L1079.41,493.14 L1081.32,493.32 L1083.22,493.51 L1085.11,493.70 L1087.00,493.90 L1089.02,494.13 L1091.03,494.37 L1093.04,494.62 L1095.05,494.89 L1097.06,495.18 L1099.05,495.47 L1101.05,495.78 L1103.04,496.09 L1105.03,496.42 L1107.01,496.76 L1108.98,497.11 L1110.96,497.47 L1112.92,497.84 L1114.89,498.22 L1116.84,498.61 L1118.80,499.01 L1120.74,499.41 L1122.69,499.82 L1124.62,500.24 L1126.55,500.67 L1128.48,501.10 L1130.40,501.54 L1132.31,501.98 L1134.22,502.43 L1136.12,502.88 L1138.01,503.34 L1139.90,503.80 L1141.93,504.31 L1143.96,504.82 L1145.98,505.35 L1147.99,505.89 L1150.00,506.44 L1152.00,507.00 L1153.99,507.57 L1155.98,508.15 L1157.96,508.74 L1159.94,509.33 L1161.90,509.93 L1163.87,510.54 L1165.82,511.16 L1167.77,511.78 L1169.71,512.41 L1171.65,513.04 L1173.58,513.68 L1175.50,514.32 L1177.42,514.97 L1179.33,515.62 L1181.24,516.27 L1183.14,516.92 L1185.03,517.58 L1186.92,518.24 L1188.80,518.90 L1190.84,519.62 L1192.87,520.35 L1194.90,521.09 L1196.92,521.83 L1198.93,522.58 L1200.94,523.34 L1202.94,524.10 L1204.93,524.87 L1206.92,525.65 L1208.90,526.42 L1210.87,527.21 L1212.83,527.99 L1214.78,528.78 L1216.73,529.58 L1218.66,530.37 L1220.59,531.17 L1222.51,531.97 L1224.42,532.78 L1226.31,533.58 L1228.20,534.39 L1230.08,535.19 L1231.94,536.00 L1233.80,536.80 L1235.82,537.69 L1237.83,538.58 L1239.82,539.48 L1241.80,540.39 L1243.77,541.31 L1245.73,542.23 L1247.68,543.16 L1249.62,544.08 L1251.54,545.01 L1253.46,545.94 L1255.36,546.87 L1257.26,547.80 L1259.14,548.72 L1261.02,549.64 L1262.88,550.56 L1264.74,551.47 L1266.59,552.38 L1268.43,553.27 L1270.26,554.16 L1272.08,555.03 L1273.90,555.90 L1275.90,556.85 L1277.89,557.79 L1279.87,558.72 L1281.84,559.65 L1283.80,560.57 L1285.75,561.49 L1287.69,562.40 L1289.61,563.30 L1291.53,564.20 L1293.43,565.10 L1295.32,565.98 L1297.19,566.87 L1299.06,567.74 L1300.90,568.62 L1302.73,569.48 L1304.55,570.34 L1306.35,571.20 L1308.13,572.05 L1309.90,572.90 L1311.97,573.90 L1314.01,574.90 L1316.02,575.90 L1318.00,576.89 L1319.96,577.88 L1321.90,578.86 L1323.82,579.83 L1325.73,580.79 L1327.62,581.74 L1329.50,582.68 L1331.37,583.60 L1333.23,584.52 L1335.10,585.41 L1336.96,586.29 L1338.83,587.16 L1340.70,588.00 L1342.70,588.88 L1344.70,589.74 L1346.69,590.57 L1348.68,591.39 L1350.66,592.20 L1352.63,592.98 L1354.60,593.76 L1356.56,594.52 L1358.51,595.26 L1360.44,596.00 L1362.36,596.73 L1364.27,597.46 L1366.16,598.18 L1368.04,598.89 L1369.90,599.60 L1371.87,600.36 L1373.83,601.10 L1375.77,601.84 L1377.70,602.57 L1379.61,603.29 L1381.50,604.00 L1383.38,604.69 L1385.25,605.38 L1387.10,606.06 L1388.95,606.73 L1390.78,607.39 L1392.59,608.04 L1394.40,608.67 L1396.20,609.30 L1398.29,610.02 L1400.36,610.72 L1402.41,611.41 L1404.46,612.08 L1406.48,612.74 L1408.49,613.39 L1410.48,614.02 L1412.44,614.64 L1414.39,615.25 L1416.32,615.84 L1418.22,616.43 L1420.10,617.00 L1422.12,617.60 L1424.09,618.18 L1426.04,618.74 L1427.96,619.28 L1429.85,619.80 L1431.73,620.32 L1433.59,620.83 L1435.45,621.34 L1437.30,621.85 L1439.15,622.37 L1441.00,622.90 L1442.86,623.44 L1444.71,624.00 L1446.55,624.56 L1448.39,625.12 L1450.21,625.68 L1452.03,626.23 L1453.85,626.78 L1455.65,627.31 L1457.44,627.83 L1459.23,628.33 L1461.00,628.80 L1462.94,629.30 L1464.88,629.78 L1466.81,630.25 L1468.73,630.71 L1470.63,631.14 L1472.52,631.56 L1474.40,631.96 L1476.25,632.33 L1478.09,632.68 L1479.90,633.00 L1481.89,633.32 L1483.84,633.61 L1485.78,633.87 L1487.69,634.09 L1489.58,634.30 L1491.46,634.49 L1493.32,634.67 L1495.16,634.83 L1497.00,635.00 L1499.04,635.18 L1501.06,635.34 L1503.05,635.49 L1505.03,635.62 L1506.99,635.74 L1508.95,635.84 L1510.92,635.93 L1512.90,636.00 L1514.89,636.04 L1516.87,636.04 L1518.85,636.02 L1520.84,635.99 L1522.82,635.96 L1524.81,635.95 L1526.80,635.95 L1528.80,636.00 L1530.59,636.06 L1532.38,636.12 L1534.19,636.18 L1536.00,636.26 L1537.80,636.36 L1539.60,636.49 L1541.39,636.65 L1543.15,636.85 L1544.90,637.10 L1546.85,637.44 L1548.79,637.83 L1550.73,638.27 L1552.64,638.74 L1554.54,639.26 L1556.40,639.81 L1558.22,640.39 L1560.00,641.00 L1561.98,641.72 L1563.93,642.48 L1565.82,643.28 L1567.68,644.12 L1569.49,645.02 L1571.27,645.98 L1573.00,647.00 L1574.97,648.31 L1576.90,649.76 L1578.76,651.27 L1580.57,652.82 L1582.32,654.35 L1584.00,655.80 L1585.91,657.47 L1587.71,659.11 L1589.44,660.72 L1591.12,662.28 L1592.80,663.80 L1594.50,665.29 L1596.21,666.76 L1597.87,668.17 L1599.44,669.50 L1600.90,670.70 L1602.96,672.44 L1604.74,673.91 L1606.60,675.10 L1608.16,675.77 L1609.79,676.26 L1611.40,676.64 L1612.90,677.00 L1614.66,677.51 L1616.27,677.93 L1617.90,678.10 L1619.60,677.91 L1621.30,677.48 L1623.00,677.00 L1624.63,676.46 L1626.26,675.88 L1628.00,675.50 L1629.51,675.44 L1631.15,675.52 L1632.74,675.66 L1634.10,675.80 L1636.18,676.12 L1637.50,676.40" stroke="#202080" stroke-width="1" fill="none" shape-rendering="crispEdges"/><path d="M672,617h2v4h-2zM671,618h4v2h-4zM714,578h2v4h-2zM713,579h4v2h-4zM763,548h2v4h-2zM762,549h4v2h-4zM814,529h2v4h-2zM813,530h4v2h-4zM866,518h2v4h-2zM865,519h4v2h-4zM919,507h2v4h-2zM918,508h4v2h-4zM974,497h2v4h-2zM973,498h4v2h-4zM1030,490h2v4h-2zM1029,491h4v2h-4zM1086,492h2v4h-2zM1085,493h4v2h-4zM1139,502h2v4h-2zM1138,503h4v2h-4zM1188,517h2v4h-2zM1187,518h4v2h-4zM1233,535h2v4h-2zM1232,536h4v2h-4zM1273,554h2v4h-2zM1272,555h4v2h-4zM1309,571h2v4h-2zM1308,572h4v2h-4zM1340,586h2v4h-2zM1339,587h4v2h-4zM1369,598h2v4h-2zM1368,599h4v2h-4zM1395,607h2v4h-2zM1394,608h4v2h-4zM1419,615h2v4h-2zM1418,616h4v2h-4zM1440,621h2v4h-2zM1439,622h4v2h-4zM1460,627h2v4h-2zM1459,628h4v2h-4zM1479,631h2v4h-2zM1478,632h4v2h-4zM1496,633h2v4h-2zM1495,634h4v2h-4zM1512,634h2v4h-2zM1511,635h4v2h-4zM1528,634h2v4h-2zM1527,635h4v2h-4zM1544,635h2v4h-2zM1543,636h4v2h-4zM1559,639h2v4h-2zM1558,640h4v2h-4zM1572,645h2v4h-2zM1571,646h4v2h-4zM1583,654h2v4h-2zM1582,655h4v2h-4zM1592,662h2v4h-2zM1591,663h4v2h-4zM1600,669h2v4h-2zM1599,670h4v2h-4zM1606,673h2v4h-2zM1605,674h4v2h-4zM1612,675h2v4h-2zM1611,676h4v2h-4zM1617,676h2v4h-2zM1616,677h4v2h-4zM1622,675h2v4h-2zM1621,676h4v2h-4zM1627,674h2v4h-2zM1626,675h4v2h-4zM1633,674h2v4h-2zM1632,675h4v2h-4z" fill="#0c0cc8" shape-rendering="crispEdges"/><path d="M672,617h2v4h-2zM671,618h4v2h-4z" fill="#262660" shape-rendering="crispEdges"/></svg><g font-family="Liberation Sans" font-size="12.5px" fill="#000"><text transform="translate(624.5,888.3) scale(1,1.13)" text-anchor="end">0</text><text transform="translate(624.5,756.3) scale(1,1.13)" text-anchor="end">0.5</text><text transform="translate(624.5,624.3) scale(1,1.13)" text-anchor="end">1</text><text transform="translate(624.5,492.3) scale(1,1.13)" text-anchor="end">1.5</text><text transform="translate(624.5,360.3) scale(1,1.13)" text-anchor="end">2</text><text transform="translate(624.5,228.3) scale(1,1.13)" text-anchor="end">2.5</text><text transform="translate(624.5,97.3) scale(1,1.13)" text-anchor="end">3</text><text transform="translate(676.5,898.9) scale(1,1.13)" text-anchor="middle">3000</text><text transform="translate(784.5,898.9) scale(1,1.13)" text-anchor="middle">3500</text><text transform="translate(893.5,898.9) scale(1,1.13)" text-anchor="middle">4000</text><text transform="translate(1001.5,898.9) scale(1,1.13)" text-anchor="middle">4500</text><text transform="translate(1110.5,898.9) scale(1,1.13)" text-anchor="middle">5000</text><text transform="translate(1218.5,898.9) scale(1,1.13)" text-anchor="middle">5500</text><text transform="translate(1327.5,898.9) scale(1,1.13)" text-anchor="middle">6000</text><text transform="translate(1435.5,898.9) scale(1,1.13)" text-anchor="middle">6500</text><text transform="translate(1544.5,898.9) scale(1,1.13)" text-anchor="middle">7000</text><text transform="translate(1652.5,898.9) scale(1,1.13)" text-anchor="middle">7500</text></g><g font-family="Liberation Sans" font-size="13px" font-weight="bold" fill="#000"><text transform="translate(1678.6,888.0) scale(0.95,1.12)">0</text><text transform="translate(1678.6,756.0) scale(0.95,1.12)">1</text><text transform="translate(1678.6,624.0) scale(0.95,1.12)">2</text><text transform="translate(1678.6,492.0) scale(0.95,1.12)">3</text></g><path d="M1675,885.5h3M1675,753.5h3M1675,621.5h3M1675,489.5h3" stroke="#000" shape-rendering="crispEdges"/><text x="1150.5" y="80.8" text-anchor="middle" font-family="Liberation Sans" font-weight="bold" font-size="15.8px">V50 mit Sito Banane</text><text x="1127.5" y="916" text-anchor="middle" font-family="Liberation Sans" font-size="13px">RPM [1/min]</text><text transform="translate(595,488) rotate(-90)" text-anchor="middle" font-family="Liberation Sans" font-size="13px">Leistung[PS]</text><text transform="translate(1712.5,677.5) rotate(90)" text-anchor="middle" font-family="Liberation Sans" font-weight="bold" font-size="12.8px">Drehm[Nm]</text><text x="681.3" y="820.3" font-family="Liberation Sans" font-size="8.3px" textLength="56.3" lengthAdjust="spacingAndGlyphs">NOT FOR SALE</text></svg>
</body></html>
